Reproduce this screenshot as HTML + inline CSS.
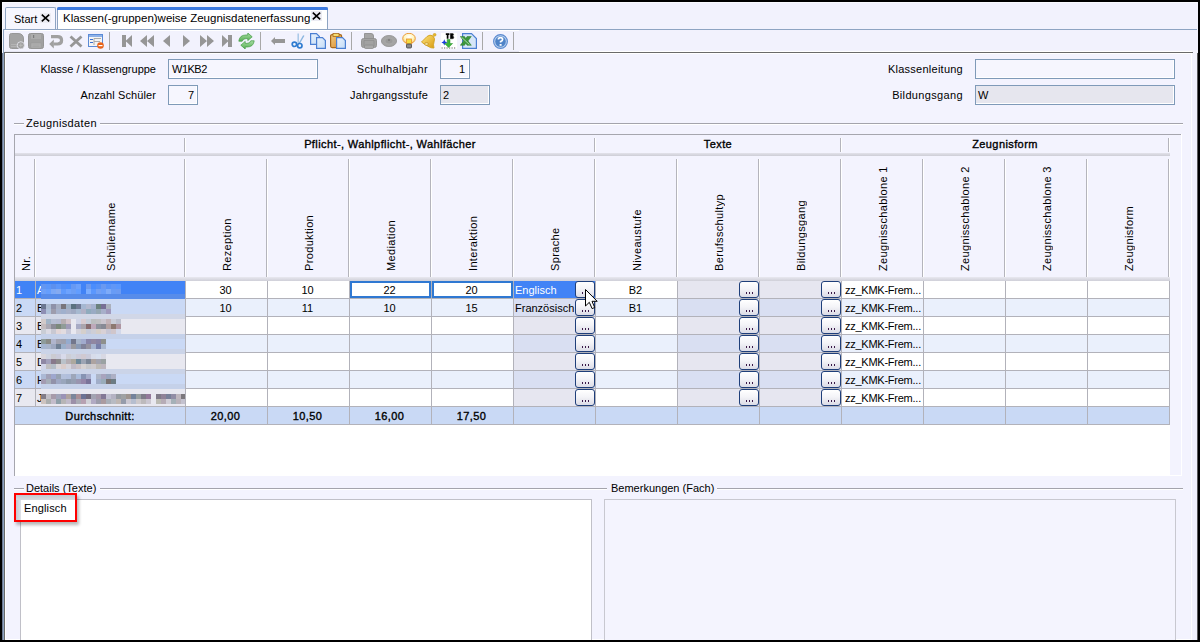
<!DOCTYPE html>
<html><head><meta charset="utf-8"><title>Zeugnisdatenerfassung</title>
<style>
html,body{margin:0;padding:0}
body{width:1200px;height:642px;position:relative;overflow:hidden;background:#000;font-family:"Liberation Sans",sans-serif;font-size:11px;color:#000}
body>div,body>svg{position:absolute}
.t{white-space:nowrap;line-height:13px;height:13px}
.vt{writing-mode:vertical-rl;transform:rotate(180deg);width:13px;text-align:left}
.btn{position:absolute;width:20px;height:17px;box-sizing:border-box;border:1px solid #1f3f7a;border-radius:3px;background:linear-gradient(#ffffff,#f4f4f8 45%,#dcdce6);}
.btn::after{content:"";position:absolute;left:6px;top:10px;width:1px;height:2px;background:#3a1848;box-shadow:3px 0 #3a1848,6px 0 #3a1848}
</style></head><body>
<div style="left:2px;top:2px;width:1196px;height:639px;background:#f2f2fd"></div>
<div style="left:2px;top:2px;width:1195px;height:1px;background:#fafaff"></div>
<div style="left:2px;top:2px;width:1px;height:51px;background:#fafaff"></div>
<div style="left:3px;top:29px;width:1194px;height:1px;background:#8ea4c2"></div>
<div style="left:3px;top:29px;width:1px;height:611px;background:#8ea4c2"></div>
<div style="left:2px;top:53px;width:1px;height:587px;background:#6c7890"></div>
<div style="left:5px;top:7px;width:51px;height:22px;background:#f6f6fe;border:1px solid #8ea4c2;border-bottom:none;border-radius:2px 2px 0 0;box-sizing:border-box"></div>
<div class="t" style="left:14px;top:13px;font-size:11px">Start</div>
<div style="left:40px;top:13px;width:11px;height:10px;background:#ececf3"></div>
<svg style="position:absolute;left:41px;top:14px" width="9" height="8" viewBox="0 0 9 8"><path d="M0.8 0.6 L8.2 7.4 M8.2 0.6 L0.8 7.4" stroke="#000" stroke-width="1.6"/></svg>
<div style="left:57px;top:7px;width:271px;height:22px;background:#fff;border:1px solid #8ea4c2;border-bottom:none;border-radius:2px 2px 0 0;box-sizing:border-box"></div>
<div style="left:57px;top:7px;width:271px;height:3px;background:#3d7ae0;border-radius:2px 2px 0 0"></div>
<div class="t" style="left:63px;top:12px;font-size:11.5px">Klassen(-gruppen)weise Zeugnisdatenerfassung</div>
<div style="left:311px;top:11px;width:11px;height:10px;background:#ececf3"></div>
<svg style="position:absolute;left:312px;top:12px" width="9" height="8" viewBox="0 0 9 8"><path d="M0.8 0.6 L8.2 7.4 M8.2 0.6 L0.8 7.4" stroke="#000" stroke-width="1.6"/></svg>
<div style="left:4px;top:30px;width:1193px;height:22px;background:#f2f2fd"></div>
<div style="left:5px;top:30px;width:514px;height:1px;background:#ffffff"></div>
<div style="left:5px;top:51px;width:514px;height:1px;background:#e6e6f2"></div>
<div style="left:519px;top:51px;width:673px;height:1px;background:#ffffff"></div>
<div style="left:4px;top:52px;width:1189px;height:1px;background:#6a6a6a"></div>
<div style="left:5px;top:53px;width:1187px;height:1px;background:#ffffff"></div>
<div style="left:4px;top:52px;width:1px;height:588px;background:#6a6a6a"></div>
<div style="left:5px;top:53px;width:1px;height:587px;background:#ffffff"></div>
<div style="left:1191px;top:53px;width:1px;height:587px;background:#ffffff"></div>
<div style="left:1197px;top:53px;width:1px;height:587px;background:#5a5a5a"></div>
<svg style="position:absolute;left:9px;top:33px" width="16" height="16" viewBox="0 0 16 16"><path d="M0.5 2.5 Q0.5 0.5 2.5 0.5 H9 Q14.5 0.5 14.5 6 V13.5 Q14.5 15.5 12.5 15.5 H2.5 Q0.5 15.5 0.5 13.5 Z" fill="#a4a4a4" stroke="#989898"/><path d="M2 11.5 H11 M2 13.5 H11" stroke="#b4b4b4"/><circle cx="11.8" cy="12.3" r="3.6" fill="#a0a0a0" stroke="#f0f0fa" stroke-width="0.7"/><path d="M11.8 10.3 V14.3 M9.8 12.3 H13.8" stroke="#bcbcbc" stroke-width="0.9"/></svg>
<svg style="position:absolute;left:28px;top:33px" width="16" height="16" viewBox="0 0 16 16"><rect x="0.5" y="0.5" width="15" height="15" rx="2" fill="#a0a0a0" stroke="#949494"/><rect x="3" y="1" width="10" height="5" fill="#acacac"/><rect x="5" y="2" width="1.2" height="3" fill="#7c7c7c"/><rect x="3" y="10" width="10" height="5" fill="#b0b0b0" stroke="#9a9a9a" stroke-width="0.6"/><path d="M4.5 12 H11.5 M4.5 13.5 H11.5" stroke="#a0a0a0" stroke-width="0.6"/></svg>
<svg style="position:absolute;left:49px;top:34px" width="15" height="15" viewBox="0 0 15 15"><path d="M2 2.6 H8.5 Q12.6 2.6 12.6 6.3 Q12.6 10 8.5 10 H4.5" fill="none" stroke="#a0a0a0" stroke-width="3.2"/><path d="M0.2 10 L4.8 5.6 V14.6 Z" fill="#a0a0a0"/></svg>
<svg style="position:absolute;left:69px;top:35px" width="14" height="13" viewBox="0 0 14 13"><path d="M1.5 1.5 L12.5 11.5 M12.5 1.5 L1.5 11.5" stroke="#969696" stroke-width="2.8"/></svg>
<svg style="position:absolute;left:88px;top:34px" width="17" height="15" viewBox="0 0 17 15"><rect x="0.5" y="0.5" width="14" height="12" fill="#f4f4f4" stroke="#5a8ad6"/><rect x="1" y="1" width="13" height="2" fill="#8fb2e8"/><rect x="2" y="5" width="3" height="1" fill="#3a6fd0"/><rect x="2" y="8" width="3" height="1" fill="#3a6fd0"/><path d="M6 4.5 H13 M6 4.5 V11 M6 7.5 H12" stroke="#aaa" fill="none"/><circle cx="12.5" cy="11.5" r="3.3" fill="#e8641a"/><rect x="10.5" y="11" width="4" height="1.2" fill="#fff"/></svg>
<div style="left:109px;top:32px;width:1px;height:18px;background:#a8a8a8"></div>
<div style="left:260px;top:32px;width:1px;height:18px;background:#a8a8a8"></div>
<div style="left:351px;top:32px;width:1px;height:18px;background:#a8a8a8"></div>
<div style="left:482px;top:32px;width:1px;height:18px;background:#a8a8a8"></div>
<div style="left:513px;top:32px;width:1px;height:18px;background:#a8a8a8"></div>
<svg style="position:absolute;left:122px;top:35px" width="10" height="12" viewBox="0 0 10 12"><rect x="0" y="0" width="4" height="12" fill="#969696"/><path d="M10 0 V12 L3.5 6 Z" fill="#969696"/></svg>
<svg style="position:absolute;left:140px;top:35px" width="14" height="12" viewBox="0 0 14 12"><path d="M7 0 V12 L0 6 Z M14 0 V12 L7 6 Z" fill="#969696"/></svg>
<svg style="position:absolute;left:163px;top:35px" width="7" height="12" viewBox="0 0 7 12"><path d="M7 0 V12 L0 6 Z" fill="#969696"/></svg>
<svg style="position:absolute;left:183px;top:35px" width="7" height="12" viewBox="0 0 7 12"><path d="M0 0 V12 L7 6 Z" fill="#969696"/></svg>
<svg style="position:absolute;left:200px;top:35px" width="14" height="12" viewBox="0 0 14 12"><path d="M0 0 V12 L7 6 Z M7 0 V12 L14 6 Z" fill="#969696"/></svg>
<svg style="position:absolute;left:222px;top:35px" width="10" height="12" viewBox="0 0 10 12"><path d="M0 0 V12 L6.5 6 Z" fill="#969696"/><rect x="6" y="0" width="4" height="12" fill="#969696"/></svg>
<svg style="position:absolute;left:238px;top:33px" width="17" height="16" viewBox="0 0 17 16"><defs><linearGradient id="gr" x1="0" y1="0" x2="0" y2="1"><stop offset="0" stop-color="#a6dca2"/><stop offset="1" stop-color="#58b054"/></linearGradient></defs><path d="M0.8 8.2 Q1.5 2 8 2 H9.8 V0 L14.2 3.8 L9.8 7.6 V5.6 H8 Q5 5.6 4.2 8.2 Z" fill="url(#gr)" stroke="#3f9a3f" stroke-width="0.7"/><path d="M16.2 7.8 Q15.5 14 9 14 H7.2 V16 L2.8 12.2 L7.2 8.4 V10.4 H9 Q12 10.4 12.8 7.8 Z" fill="url(#gr)" stroke="#3f9a3f" stroke-width="0.7"/></svg>
<svg style="position:absolute;left:271px;top:37px" width="14" height="8" viewBox="0 0 14 8"><path d="M0 4 L4 0 V2 H14 V6 H4 V8 Z" fill="#969696"/></svg>
<svg style="position:absolute;left:291px;top:33px" width="14" height="16" viewBox="0 0 14 16"><path d="M7.2 0.5 L7.2 10.5" stroke="#a8c8e8" stroke-width="1.5"/><path d="M12.8 2.5 L8.2 10.5" stroke="#8ab6e0" stroke-width="1.5"/><circle cx="3.4" cy="11.3" r="2.2" fill="#f0f4fc" stroke="#2f7bd0" stroke-width="1.7"/><circle cx="8.8" cy="12.7" r="2.2" fill="#f0f4fc" stroke="#2f7bd0" stroke-width="1.7"/></svg>
<svg style="position:absolute;left:310px;top:33px" width="16" height="16" viewBox="0 0 16 16"><defs><linearGradient id="dg" x1="0" y1="0" x2="1" y2="1"><stop offset="0" stop-color="#eaf2fc"/><stop offset="1" stop-color="#c4dcf6"/></linearGradient></defs><path d="M0.6 0.6 H6.5 L9.4 3.5 V11.4 H0.6 Z" fill="url(#dg)" stroke="#4b7fd2" stroke-width="1.2"/><path d="M6.6 4.6 H12.5 L15.4 7.5 V15.4 H6.6 Z" fill="url(#dg)" stroke="#4b7fd2" stroke-width="1.2"/></svg>
<svg style="position:absolute;left:330px;top:33px" width="16" height="16" viewBox="0 0 16 16"><defs><linearGradient id="cb" x1="0" y1="0" x2="1" y2="1"><stop offset="0" stop-color="#f2cc80"/><stop offset="1" stop-color="#d88a30"/></linearGradient></defs><rect x="0.6" y="1.6" width="11" height="13" rx="1.5" fill="url(#cb)" stroke="#a8681c" stroke-width="1.2"/><rect x="3" y="0.5" width="6" height="3" fill="#f4dc70" stroke="#a8681c" stroke-width="0.8"/><path d="M6.6 4.6 H12.5 L15.4 7.5 V15.4 H6.6 Z" fill="url(#dg)" stroke="#4b7fd2" stroke-width="1.2"/></svg>
<svg style="position:absolute;left:361px;top:33px" width="16" height="16" viewBox="0 0 16 16"><path d="M3.5 0.5 H10 Q12.5 0.5 12.5 3 V7.5 H3.5 Z" fill="#a6a6a6" stroke="#8e8e8e" stroke-width="0.9"/><rect x="0.5" y="5.5" width="15" height="9" rx="2" fill="#a2a2a2" stroke="#8e8e8e" stroke-width="0.9"/><path d="M3 7.5 H13 M3 7.5 V13 M13 7.5 V13" stroke="#8e8e8e" stroke-width="0.7"/><rect x="3.5" y="12" width="9" height="3.5" rx="1" fill="#a8a8a8" stroke="#8e8e8e" stroke-width="0.8"/></svg>
<svg style="position:absolute;left:381px;top:35px" width="16" height="12" viewBox="0 0 16 12"><ellipse cx="8" cy="6" rx="7.6" ry="5.6" fill="#a4a4a4" stroke="#909090" stroke-width="0.8"/><ellipse cx="8" cy="6" rx="4" ry="3" fill="#9a9a9a" stroke="#acacac" stroke-width="0.6"/><circle cx="8" cy="5" r="1" fill="#7a7a7a"/></svg>
<svg style="position:absolute;left:402px;top:33px" width="15" height="16" viewBox="0 0 15 16"><defs><radialGradient id="bl" cx="0.5" cy="0.35" r="0.6"><stop offset="0" stop-color="#ffffff"/><stop offset="0.6" stop-color="#fff6c0"/><stop offset="1" stop-color="#f8d070"/></radialGradient></defs><ellipse cx="7" cy="5.5" rx="6.3" ry="5.2" fill="url(#bl)" stroke="#eb9c3c" stroke-width="1"/><rect x="4.5" y="6" width="5" height="5" fill="#f6dc40" stroke="#e89030" stroke-width="0.8"/><rect x="4.5" y="11" width="5" height="4" rx="1" fill="#8a8a8a" stroke="#444" stroke-width="0.8"/></svg>
<svg style="position:absolute;left:421px;top:33px" width="16" height="16" viewBox="0 0 16 16"><defs><linearGradient id="bg1" x1="0" y1="0" x2="1" y2="1"><stop offset="0" stop-color="#ffe680"/><stop offset="1" stop-color="#d89a10"/></linearGradient></defs><path d="M0.5 9 Q4 5.5 6 3.5 Q9 1 12 3 Q14.5 5.5 13 9 Q12 11.5 13 15 Q10 15.5 6.5 13 Q3 11 0.5 9 Z" fill="url(#bg1)" stroke="#d0a020" stroke-width="0.9"/><circle cx="13.6" cy="1.8" r="1.4" fill="#e8b828" stroke="#c89818" stroke-width="0.6"/><ellipse cx="5.5" cy="11" rx="2" ry="1.3" fill="#f8e8a0" stroke="#b88010" stroke-width="0.6"/></svg>
<svg style="position:absolute;left:441px;top:33px" width="16" height="16" viewBox="0 0 16 16"><rect x="0" y="0" width="16" height="16" fill="#fff"/><path d="M4.8 1.2 H8.4 M6.6 1.2 V5.8" stroke="#000" stroke-width="1.7"/><path d="M9.3 0.4 H11.2 Q12.6 0.4 12.6 1.6 Q12.6 2.6 11.4 2.9 Q12.8 3.2 12.8 4.4 Q12.8 5.8 11.2 5.8 H9.3 Z" fill="#000" stroke="#000" stroke-width="0.4"/><path d="M3.3 6.3 L4.2 8.5 L6.3 9.5 L4.2 10.4 L3.3 12.6 L2.4 10.4 L0.4 9.5 L2.4 8.5 Z" fill="#1a3ce0"/><path d="M6.2 6.5 H9 V10.5 H11.6 L7.6 14.5 L3.6 10.5 H6.2 Z" fill="#3cb43c" stroke="#208c20" stroke-width="0.5"/><path d="M0.5 15 H15.5" stroke="#606060" stroke-width="1.2" stroke-dasharray="1.2 1.3"/></svg>
<svg style="position:absolute;left:460px;top:33px" width="17" height="16" viewBox="0 0 17 16"><path d="M2.6 0.6 H11.5 L16.4 5.5 V15.4 H2.6 Z" fill="#d6e6f8" stroke="#4b7fd2" stroke-width="1.2"/><path d="M0.3 3.5 H4.5 L5.8 5.6 L7.1 3.5 H11.3 L8 7.9 L11.3 12.3 H7.1 L5.8 10.2 L4.5 12.3 H0.3 L3.6 7.9 Z" fill="#3c963c" stroke="#2a7a2a" stroke-width="0.5"/><path d="M1.6 4.3 L9.4 11.5" stroke="#b8e4b8" stroke-width="0.9"/></svg>
<svg style="position:absolute;left:493px;top:34px" width="15" height="15" viewBox="0 0 15 15"><circle cx="7.5" cy="7.5" r="6.9" fill="#b8d0ee" stroke="#5a8ad0" stroke-width="1.1"/><circle cx="7.5" cy="7.5" r="5.3" fill="#4f84c8"/><path d="M5.4 5.6 Q5.4 3.6 7.5 3.6 Q9.6 3.6 9.6 5.4 Q9.6 6.7 7.6 7.5 V8.6" fill="none" stroke="#fff" stroke-width="1.7"/><rect x="6.6" y="10" width="2" height="1.8" fill="#fff"/></svg>
<div style="left:6px;top:54px;width:1185px;height:585px;background:#f3f3fe"></div>
<div style="left:5px;top:639px;width:1187px;height:1px;background:#fff"></div>
<div class="t" style="left:-244px;width:400px;text-align:right;top:63px;">Klasse / Klassengruppe</div>
<div class="t" style="left:-244px;width:400px;text-align:right;top:89px;letter-spacing:0.1px">Anzahl Schüler</div>
<div style="left:168px;top:59px;width:150px;height:20px;background:#f6f6fe;border:1px solid #7f9ab8;box-sizing:border-box;box-shadow:inset -1px -1px #fff"></div>
<div class="t" style="left:172px;top:63px;letter-spacing:-0.5px">W1KB2</div>
<div style="left:168px;top:85px;width:30px;height:20px;background:#f6f6fe;border:1px solid #7f9ab8;box-sizing:border-box;box-shadow:inset -1px -1px #fff"></div>
<div class="t" style="left:-206px;width:400px;text-align:right;top:89px;">7</div>
<div class="t" style="left:28px;width:400px;text-align:right;top:63px;letter-spacing:0.35px">Schulhalbjahr</div>
<div class="t" style="left:28px;width:400px;text-align:right;top:89px;letter-spacing:0.2px">Jahrgangsstufe</div>
<div style="left:440px;top:59px;width:30px;height:20px;background:#f6f6fe;border:1px solid #7f9ab8;box-sizing:border-box;box-shadow:inset -1px -1px #fff"></div>
<div class="t" style="left:65px;width:400px;text-align:right;top:63px;">1</div>
<div style="left:440px;top:85px;width:50px;height:20px;background:#e6e6ee;border:1px solid #7f9ab8;box-sizing:border-box;box-shadow:inset -1px -1px #fff"></div>
<div class="t" style="left:443px;top:89px;">2</div>
<div class="t" style="left:563px;width:400px;text-align:right;top:63px;letter-spacing:0.25px">Klassenleitung</div>
<div class="t" style="left:563px;width:400px;text-align:right;top:89px;letter-spacing:0.35px">Bildungsgang</div>
<div style="left:975px;top:59px;width:200px;height:20px;background:#f6f6fe;border:1px solid #7f9ab8;box-sizing:border-box;box-shadow:inset -1px -1px #fff"></div>
<div style="left:975px;top:85px;width:200px;height:20px;background:#e6e6ee;border:1px solid #7f9ab8;box-sizing:border-box;box-shadow:inset -1px -1px #fff"></div>
<div class="t" style="left:978px;top:89px;">W</div>
<div style="left:14px;top:123px;width:10px;height:1px;background:#a4a4ac"></div>
<div style="left:14px;top:124px;width:10px;height:1px;background:#fff"></div>
<div class="t" style="left:26px;top:117px;letter-spacing:0.35px">Zeugnisdaten</div>
<div style="left:100px;top:123px;width:1083px;height:1px;background:#a4a4ac"></div>
<div style="left:100px;top:124px;width:1083px;height:1px;background:#fff"></div>
<div style="left:14px;top:134px;width:1168px;height:342px;background:#fff"></div>
<div style="left:15px;top:135px;width:1166px;height:146px;background:#f3f3fe"></div>
<div style="left:1170px;top:135px;width:11px;height:340px;background:#f3f3fe"></div>
<div style="left:14px;top:134px;width:1168px;height:1px;background:#a6a6ae"></div>
<div style="left:14px;top:134px;width:1px;height:342px;background:#a6a6ae"></div>
<div style="left:1181px;top:134px;width:1px;height:342px;background:#fff"></div>
<div style="left:15px;top:153px;width:1155px;height:3px;background:linear-gradient(#e2e2ea,#cdcdd6)"></div>
<div style="left:184px;top:138px;width:1px;height:14px;background:#b4b4bc"></div>
<div style="left:185px;top:138px;width:1px;height:14px;background:#fff"></div>
<div style="left:594px;top:138px;width:1px;height:14px;background:#b4b4bc"></div>
<div style="left:595px;top:138px;width:1px;height:14px;background:#fff"></div>
<div style="left:840px;top:138px;width:1px;height:14px;background:#b4b4bc"></div>
<div style="left:841px;top:138px;width:1px;height:14px;background:#fff"></div>
<div style="left:1168px;top:138px;width:1px;height:14px;background:#b4b4bc"></div>
<div style="left:1169px;top:138px;width:1px;height:14px;background:#fff"></div>
<div class="t" style="left:185px;width:410px;text-align:center;top:138px;-webkit-text-stroke:0.35px #000;letter-spacing:0.4px">Pflicht-, Wahlpflicht-, Wahlfächer</div>
<div class="t" style="left:595px;width:246px;text-align:center;top:138px;-webkit-text-stroke:0.35px #000;letter-spacing:0.4px">Texte</div>
<div class="t" style="left:841px;width:328px;text-align:center;top:138px;-webkit-text-stroke:0.35px #000;letter-spacing:0.4px">Zeugnisform</div>
<div style="left:15px;top:277px;width:1155px;height:4px;background:linear-gradient(#e8e8f0,#cfcfd8)"></div>
<div style="left:34px;top:159px;width:1px;height:118px;background:#b4b4bc"></div>
<div style="left:35px;top:159px;width:1px;height:118px;background:#fff"></div>
<div style="left:184px;top:159px;width:1px;height:118px;background:#b4b4bc"></div>
<div style="left:185px;top:159px;width:1px;height:118px;background:#fff"></div>
<div style="left:266px;top:159px;width:1px;height:118px;background:#b4b4bc"></div>
<div style="left:267px;top:159px;width:1px;height:118px;background:#fff"></div>
<div style="left:348px;top:159px;width:1px;height:118px;background:#b4b4bc"></div>
<div style="left:349px;top:159px;width:1px;height:118px;background:#fff"></div>
<div style="left:430px;top:159px;width:1px;height:118px;background:#b4b4bc"></div>
<div style="left:431px;top:159px;width:1px;height:118px;background:#fff"></div>
<div style="left:512px;top:159px;width:1px;height:118px;background:#b4b4bc"></div>
<div style="left:513px;top:159px;width:1px;height:118px;background:#fff"></div>
<div style="left:594px;top:159px;width:1px;height:118px;background:#b4b4bc"></div>
<div style="left:595px;top:159px;width:1px;height:118px;background:#fff"></div>
<div style="left:676px;top:159px;width:1px;height:118px;background:#b4b4bc"></div>
<div style="left:677px;top:159px;width:1px;height:118px;background:#fff"></div>
<div style="left:758px;top:159px;width:1px;height:118px;background:#b4b4bc"></div>
<div style="left:759px;top:159px;width:1px;height:118px;background:#fff"></div>
<div style="left:840px;top:159px;width:1px;height:118px;background:#b4b4bc"></div>
<div style="left:841px;top:159px;width:1px;height:118px;background:#fff"></div>
<div style="left:922px;top:159px;width:1px;height:118px;background:#b4b4bc"></div>
<div style="left:923px;top:159px;width:1px;height:118px;background:#fff"></div>
<div style="left:1004px;top:159px;width:1px;height:118px;background:#b4b4bc"></div>
<div style="left:1005px;top:159px;width:1px;height:118px;background:#fff"></div>
<div style="left:1086px;top:159px;width:1px;height:118px;background:#b4b4bc"></div>
<div style="left:1087px;top:159px;width:1px;height:118px;background:#fff"></div>
<div style="left:1168px;top:159px;width:1px;height:118px;background:#b4b4bc"></div>
<div style="left:1169px;top:159px;width:1px;height:118px;background:#fff"></div>
<div class="t vt" style="left:19.5px;top:171px;height:100px;letter-spacing:0.35px">Nr.</div>
<div class="t vt" style="left:104.5px;top:171px;height:100px;letter-spacing:0.35px">Schülername</div>
<div class="t vt" style="left:220.5px;top:171px;height:100px;letter-spacing:0.35px">Rezeption</div>
<div class="t vt" style="left:302.5px;top:171px;height:100px;letter-spacing:0.35px">Produktion</div>
<div class="t vt" style="left:384.5px;top:171px;height:100px;letter-spacing:0.35px">Mediation</div>
<div class="t vt" style="left:466.5px;top:171px;height:100px;letter-spacing:0.35px">Interaktion</div>
<div class="t vt" style="left:548.5px;top:171px;height:100px;letter-spacing:0.35px">Sprache</div>
<div class="t vt" style="left:630.5px;top:171px;height:100px;letter-spacing:0.35px">Niveaustufe</div>
<div class="t vt" style="left:712.5px;top:171px;height:100px;letter-spacing:0.35px">Berufsschultyp</div>
<div class="t vt" style="left:794.5px;top:171px;height:100px;letter-spacing:0.35px">Bildungsgang</div>
<div class="t vt" style="left:876.5px;top:171px;height:100px;letter-spacing:0.35px">Zeugnisschablone 1</div>
<div class="t vt" style="left:958.5px;top:171px;height:100px;letter-spacing:0.35px">Zeugnisschablone 2</div>
<div class="t vt" style="left:1040.5px;top:171px;height:100px;letter-spacing:0.35px">Zeugnisschablone 3</div>
<div class="t vt" style="left:1122.5px;top:171px;height:100px;letter-spacing:0.35px">Zeugnisform</div>
<div style="left:15px;top:281px;width:20px;height:17px;background:#4183f6"></div>
<div style="left:35px;top:281px;width:150px;height:17px;background:#4183f6"></div>
<div style="left:185px;top:281px;width:82px;height:17px;background:#fff"></div>
<div style="left:267px;top:281px;width:82px;height:17px;background:#fff"></div>
<div style="left:349px;top:281px;width:82px;height:17px;background:#fff"></div>
<div style="left:431px;top:281px;width:82px;height:17px;background:#fff"></div>
<div style="left:513px;top:281px;width:82px;height:17px;background:#4183f6"></div>
<div style="left:595px;top:281px;width:82px;height:17px;background:#fff"></div>
<div style="left:677px;top:281px;width:82px;height:17px;background:#e6e6f0"></div>
<div style="left:759px;top:281px;width:82px;height:17px;background:#e6e6f0"></div>
<div style="left:841px;top:281px;width:82px;height:17px;background:#fff"></div>
<div style="left:923px;top:281px;width:82px;height:17px;background:#fff"></div>
<div style="left:1005px;top:281px;width:82px;height:17px;background:#fff"></div>
<div style="left:1087px;top:281px;width:82px;height:17px;background:#fff"></div>
<div style="left:15px;top:298px;width:1155px;height:1px;background:#b2b2ba"></div>
<div class="t" style="left:16px;top:284px;color:#fff">1</div>
<div class="t" style="left:37px;top:284px;color:#fff">A</div>
<div class="t" style="left:185px;width:81px;text-align:center;top:284px;">30</div>
<div class="t" style="left:267px;width:81px;text-align:center;top:284px;">10</div>
<div class="t" style="left:349px;width:81px;text-align:center;top:284px;">22</div>
<div class="t" style="left:431px;width:81px;text-align:center;top:284px;">20</div>
<div class="t" style="left:515px;top:284px;color:#fff">Englisch</div>
<div class="t" style="left:595px;width:81px;text-align:center;top:284px;">B2</div>
<div class="t" style="left:845px;top:284px;letter-spacing:-0.25px">zz_KMK-Frem...</div>
<div style="left:15px;top:299px;width:20px;height:17px;background:#cad9f5"></div>
<div style="left:35px;top:299px;width:150px;height:17px;background:#cad9f5"></div>
<div style="left:185px;top:299px;width:82px;height:17px;background:#eaf0fc"></div>
<div style="left:267px;top:299px;width:82px;height:17px;background:#eaf0fc"></div>
<div style="left:349px;top:299px;width:82px;height:17px;background:#eaf0fc"></div>
<div style="left:431px;top:299px;width:82px;height:17px;background:#eaf0fc"></div>
<div style="left:513px;top:299px;width:82px;height:17px;background:#d9dff2"></div>
<div style="left:595px;top:299px;width:82px;height:17px;background:#eaf0fc"></div>
<div style="left:677px;top:299px;width:82px;height:17px;background:#d9dff2"></div>
<div style="left:759px;top:299px;width:82px;height:17px;background:#d9dff2"></div>
<div style="left:841px;top:299px;width:82px;height:17px;background:#eaf0fc"></div>
<div style="left:923px;top:299px;width:82px;height:17px;background:#eaf0fc"></div>
<div style="left:1005px;top:299px;width:82px;height:17px;background:#eaf0fc"></div>
<div style="left:1087px;top:299px;width:82px;height:17px;background:#eaf0fc"></div>
<div style="left:15px;top:316px;width:1155px;height:1px;background:#b2b2ba"></div>
<div class="t" style="left:16px;top:302px;">2</div>
<div class="t" style="left:37px;top:302px;">B</div>
<div class="t" style="left:185px;width:81px;text-align:center;top:302px;">10</div>
<div class="t" style="left:267px;width:81px;text-align:center;top:302px;">11</div>
<div class="t" style="left:349px;width:81px;text-align:center;top:302px;">10</div>
<div class="t" style="left:431px;width:81px;text-align:center;top:302px;">15</div>
<div class="t" style="left:515px;top:302px;">Französisch</div>
<div class="t" style="left:595px;width:81px;text-align:center;top:302px;">B1</div>
<div class="t" style="left:845px;top:302px;letter-spacing:-0.25px">zz_KMK-Frem...</div>
<div style="left:15px;top:317px;width:20px;height:17px;background:#e8e8f0"></div>
<div style="left:35px;top:317px;width:150px;height:17px;background:#e8e8f0"></div>
<div style="left:185px;top:317px;width:82px;height:17px;background:#fff"></div>
<div style="left:267px;top:317px;width:82px;height:17px;background:#fff"></div>
<div style="left:349px;top:317px;width:82px;height:17px;background:#fff"></div>
<div style="left:431px;top:317px;width:82px;height:17px;background:#fff"></div>
<div style="left:513px;top:317px;width:82px;height:17px;background:#e6e6f0"></div>
<div style="left:595px;top:317px;width:82px;height:17px;background:#fff"></div>
<div style="left:677px;top:317px;width:82px;height:17px;background:#e6e6f0"></div>
<div style="left:759px;top:317px;width:82px;height:17px;background:#e6e6f0"></div>
<div style="left:841px;top:317px;width:82px;height:17px;background:#fff"></div>
<div style="left:923px;top:317px;width:82px;height:17px;background:#fff"></div>
<div style="left:1005px;top:317px;width:82px;height:17px;background:#fff"></div>
<div style="left:1087px;top:317px;width:82px;height:17px;background:#fff"></div>
<div style="left:15px;top:334px;width:1155px;height:1px;background:#b2b2ba"></div>
<div class="t" style="left:16px;top:320px;">3</div>
<div class="t" style="left:37px;top:320px;">B</div>
<div class="t" style="left:845px;top:320px;letter-spacing:-0.25px">zz_KMK-Frem...</div>
<div style="left:15px;top:335px;width:20px;height:17px;background:#cad9f5"></div>
<div style="left:35px;top:335px;width:150px;height:17px;background:#cad9f5"></div>
<div style="left:185px;top:335px;width:82px;height:17px;background:#eaf0fc"></div>
<div style="left:267px;top:335px;width:82px;height:17px;background:#eaf0fc"></div>
<div style="left:349px;top:335px;width:82px;height:17px;background:#eaf0fc"></div>
<div style="left:431px;top:335px;width:82px;height:17px;background:#eaf0fc"></div>
<div style="left:513px;top:335px;width:82px;height:17px;background:#d9dff2"></div>
<div style="left:595px;top:335px;width:82px;height:17px;background:#eaf0fc"></div>
<div style="left:677px;top:335px;width:82px;height:17px;background:#d9dff2"></div>
<div style="left:759px;top:335px;width:82px;height:17px;background:#d9dff2"></div>
<div style="left:841px;top:335px;width:82px;height:17px;background:#eaf0fc"></div>
<div style="left:923px;top:335px;width:82px;height:17px;background:#eaf0fc"></div>
<div style="left:1005px;top:335px;width:82px;height:17px;background:#eaf0fc"></div>
<div style="left:1087px;top:335px;width:82px;height:17px;background:#eaf0fc"></div>
<div style="left:15px;top:352px;width:1155px;height:1px;background:#b2b2ba"></div>
<div class="t" style="left:16px;top:338px;">4</div>
<div class="t" style="left:37px;top:338px;">B</div>
<div class="t" style="left:845px;top:338px;letter-spacing:-0.25px">zz_KMK-Frem...</div>
<div style="left:15px;top:353px;width:20px;height:17px;background:#e8e8f0"></div>
<div style="left:35px;top:353px;width:150px;height:17px;background:#e8e8f0"></div>
<div style="left:185px;top:353px;width:82px;height:17px;background:#fff"></div>
<div style="left:267px;top:353px;width:82px;height:17px;background:#fff"></div>
<div style="left:349px;top:353px;width:82px;height:17px;background:#fff"></div>
<div style="left:431px;top:353px;width:82px;height:17px;background:#fff"></div>
<div style="left:513px;top:353px;width:82px;height:17px;background:#e6e6f0"></div>
<div style="left:595px;top:353px;width:82px;height:17px;background:#fff"></div>
<div style="left:677px;top:353px;width:82px;height:17px;background:#e6e6f0"></div>
<div style="left:759px;top:353px;width:82px;height:17px;background:#e6e6f0"></div>
<div style="left:841px;top:353px;width:82px;height:17px;background:#fff"></div>
<div style="left:923px;top:353px;width:82px;height:17px;background:#fff"></div>
<div style="left:1005px;top:353px;width:82px;height:17px;background:#fff"></div>
<div style="left:1087px;top:353px;width:82px;height:17px;background:#fff"></div>
<div style="left:15px;top:370px;width:1155px;height:1px;background:#b2b2ba"></div>
<div class="t" style="left:16px;top:356px;">5</div>
<div class="t" style="left:37px;top:356px;">D</div>
<div class="t" style="left:845px;top:356px;letter-spacing:-0.25px">zz_KMK-Frem...</div>
<div style="left:15px;top:371px;width:20px;height:17px;background:#cad9f5"></div>
<div style="left:35px;top:371px;width:150px;height:17px;background:#cad9f5"></div>
<div style="left:185px;top:371px;width:82px;height:17px;background:#eaf0fc"></div>
<div style="left:267px;top:371px;width:82px;height:17px;background:#eaf0fc"></div>
<div style="left:349px;top:371px;width:82px;height:17px;background:#eaf0fc"></div>
<div style="left:431px;top:371px;width:82px;height:17px;background:#eaf0fc"></div>
<div style="left:513px;top:371px;width:82px;height:17px;background:#d9dff2"></div>
<div style="left:595px;top:371px;width:82px;height:17px;background:#eaf0fc"></div>
<div style="left:677px;top:371px;width:82px;height:17px;background:#d9dff2"></div>
<div style="left:759px;top:371px;width:82px;height:17px;background:#d9dff2"></div>
<div style="left:841px;top:371px;width:82px;height:17px;background:#eaf0fc"></div>
<div style="left:923px;top:371px;width:82px;height:17px;background:#eaf0fc"></div>
<div style="left:1005px;top:371px;width:82px;height:17px;background:#eaf0fc"></div>
<div style="left:1087px;top:371px;width:82px;height:17px;background:#eaf0fc"></div>
<div style="left:15px;top:388px;width:1155px;height:1px;background:#b2b2ba"></div>
<div class="t" style="left:16px;top:374px;">6</div>
<div class="t" style="left:37px;top:374px;">H</div>
<div class="t" style="left:845px;top:374px;letter-spacing:-0.25px">zz_KMK-Frem...</div>
<div style="left:15px;top:389px;width:20px;height:17px;background:#e8e8f0"></div>
<div style="left:35px;top:389px;width:150px;height:17px;background:#e8e8f0"></div>
<div style="left:185px;top:389px;width:82px;height:17px;background:#fff"></div>
<div style="left:267px;top:389px;width:82px;height:17px;background:#fff"></div>
<div style="left:349px;top:389px;width:82px;height:17px;background:#fff"></div>
<div style="left:431px;top:389px;width:82px;height:17px;background:#fff"></div>
<div style="left:513px;top:389px;width:82px;height:17px;background:#e6e6f0"></div>
<div style="left:595px;top:389px;width:82px;height:17px;background:#fff"></div>
<div style="left:677px;top:389px;width:82px;height:17px;background:#e6e6f0"></div>
<div style="left:759px;top:389px;width:82px;height:17px;background:#e6e6f0"></div>
<div style="left:841px;top:389px;width:82px;height:17px;background:#fff"></div>
<div style="left:923px;top:389px;width:82px;height:17px;background:#fff"></div>
<div style="left:1005px;top:389px;width:82px;height:17px;background:#fff"></div>
<div style="left:1087px;top:389px;width:82px;height:17px;background:#fff"></div>
<div style="left:15px;top:406px;width:1155px;height:1px;background:#b2b2ba"></div>
<div class="t" style="left:16px;top:392px;">7</div>
<div class="t" style="left:37px;top:392px;">J</div>
<div class="t" style="left:845px;top:392px;letter-spacing:-0.25px">zz_KMK-Frem...</div>
<div style="left:15px;top:407px;width:1154px;height:17px;background:#c9d9f5"></div>
<div style="left:15px;top:424px;width:1155px;height:1px;background:#b2b2ba"></div>
<div class="t" style="left:15px;width:170px;text-align:center;top:410px;-webkit-text-stroke:0.35px #000;letter-spacing:0.4px">Durchschnitt:</div>
<div class="t" style="left:185px;width:81px;text-align:center;top:410px;-webkit-text-stroke:0.35px #000;letter-spacing:0.4px">20,00</div>
<div class="t" style="left:267px;width:81px;text-align:center;top:410px;-webkit-text-stroke:0.35px #000;letter-spacing:0.4px">10,50</div>
<div class="t" style="left:349px;width:81px;text-align:center;top:410px;-webkit-text-stroke:0.35px #000;letter-spacing:0.4px">16,00</div>
<div class="t" style="left:431px;width:81px;text-align:center;top:410px;-webkit-text-stroke:0.35px #000;letter-spacing:0.4px">17,50</div>
<div style="left:35px;top:281px;width:1px;height:126px;background:#b2b2ba"></div>
<div style="left:185px;top:281px;width:1px;height:144px;background:#b2b2ba"></div>
<div style="left:267px;top:281px;width:1px;height:144px;background:#b2b2ba"></div>
<div style="left:349px;top:281px;width:1px;height:144px;background:#b2b2ba"></div>
<div style="left:431px;top:281px;width:1px;height:144px;background:#b2b2ba"></div>
<div style="left:513px;top:281px;width:1px;height:144px;background:#b2b2ba"></div>
<div style="left:595px;top:281px;width:1px;height:144px;background:#b2b2ba"></div>
<div style="left:677px;top:281px;width:1px;height:144px;background:#b2b2ba"></div>
<div style="left:759px;top:281px;width:1px;height:144px;background:#b2b2ba"></div>
<div style="left:841px;top:281px;width:1px;height:144px;background:#b2b2ba"></div>
<div style="left:923px;top:281px;width:1px;height:144px;background:#b2b2ba"></div>
<div style="left:1005px;top:281px;width:1px;height:144px;background:#b2b2ba"></div>
<div style="left:1087px;top:281px;width:1px;height:144px;background:#b2b2ba"></div>
<div style="left:1169px;top:281px;width:1px;height:144px;background:#b2b2ba"></div>
<div style="left:350px;top:281px;width:81px;height:17px;border:2px solid #2f78d2;box-sizing:border-box"></div>
<div style="left:432px;top:281px;width:81px;height:17px;border:2px solid #2f78d2;box-sizing:border-box"></div>
<div class="btn" style="left:575px;top:281px"></div>
<div class="btn" style="left:739px;top:281px"></div>
<div class="btn" style="left:821px;top:281px"></div>
<div class="btn" style="left:575px;top:299px"></div>
<div class="btn" style="left:739px;top:299px"></div>
<div class="btn" style="left:821px;top:299px"></div>
<div class="btn" style="left:575px;top:317px"></div>
<div class="btn" style="left:739px;top:317px"></div>
<div class="btn" style="left:821px;top:317px"></div>
<div class="btn" style="left:575px;top:335px"></div>
<div class="btn" style="left:739px;top:335px"></div>
<div class="btn" style="left:821px;top:335px"></div>
<div class="btn" style="left:575px;top:353px"></div>
<div class="btn" style="left:739px;top:353px"></div>
<div class="btn" style="left:821px;top:353px"></div>
<div class="btn" style="left:575px;top:371px"></div>
<div class="btn" style="left:739px;top:371px"></div>
<div class="btn" style="left:821px;top:371px"></div>
<div class="btn" style="left:575px;top:389px"></div>
<div class="btn" style="left:739px;top:389px"></div>
<div class="btn" style="left:821px;top:389px"></div>
<div style="left:41px;top:284px;width:5px;height:5px;background:#6496f1"></div>
<div style="left:46px;top:284px;width:5px;height:5px;background:#5c96f9"></div>
<div style="left:51px;top:284px;width:5px;height:5px;background:#5d90ee"></div>
<div style="left:56px;top:284px;width:5px;height:5px;background:#5c96fa"></div>
<div style="left:61px;top:284px;width:5px;height:5px;background:#538ef5"></div>
<div style="left:66px;top:284px;width:5px;height:5px;background:#4c8ffd"></div>
<div style="left:71px;top:284px;width:5px;height:5px;background:#6799f3"></div>
<div style="left:76px;top:284px;width:5px;height:5px;background:#6da1fb"></div>
<div style="left:81px;top:284px;width:5px;height:5px;background:#4183f6"></div>
<div style="left:86px;top:284px;width:5px;height:5px;background:#6c9aef"></div>
<div style="left:91px;top:284px;width:5px;height:5px;background:#4a8dfd"></div>
<div style="left:96px;top:284px;width:5px;height:5px;background:#5490f7"></div>
<div style="left:101px;top:284px;width:5px;height:5px;background:#6999f1"></div>
<div style="left:106px;top:284px;width:5px;height:5px;background:#5893f9"></div>
<div style="left:111px;top:284px;width:5px;height:5px;background:#6197f6"></div>
<div style="left:116px;top:284px;width:5px;height:5px;background:#5a97fd"></div>
<div style="left:121px;top:284px;width:5px;height:5px;background:#4183f6"></div>
<div style="left:126px;top:284px;width:5px;height:5px;background:#4183f6"></div>
<div style="left:131px;top:284px;width:5px;height:5px;background:#4183f6"></div>
<div style="left:136px;top:284px;width:5px;height:5px;background:#4183f6"></div>
<div style="left:141px;top:284px;width:5px;height:5px;background:#4183f6"></div>
<div style="left:146px;top:284px;width:5px;height:5px;background:#4183f6"></div>
<div style="left:151px;top:284px;width:5px;height:5px;background:#4183f6"></div>
<div style="left:156px;top:284px;width:5px;height:5px;background:#4183f6"></div>
<div style="left:161px;top:284px;width:5px;height:5px;background:#4183f6"></div>
<div style="left:166px;top:284px;width:5px;height:5px;background:#4183f6"></div>
<div style="left:171px;top:284px;width:5px;height:5px;background:#4183f6"></div>
<div style="left:176px;top:284px;width:5px;height:5px;background:#4183f6"></div>
<div style="left:181px;top:284px;width:4px;height:5px;background:#4183f6"></div>
<div style="left:41px;top:289px;width:5px;height:5px;background:#6da0f8"></div>
<div style="left:46px;top:289px;width:5px;height:5px;background:#659efd"></div>
<div style="left:51px;top:289px;width:5px;height:5px;background:#7ca8f6"></div>
<div style="left:56px;top:289px;width:5px;height:5px;background:#85aaf0"></div>
<div style="left:61px;top:289px;width:5px;height:5px;background:#5f9afd"></div>
<div style="left:66px;top:289px;width:5px;height:5px;background:#6ea3fd"></div>
<div style="left:71px;top:289px;width:5px;height:5px;background:#6b9ef6"></div>
<div style="left:76px;top:289px;width:5px;height:5px;background:#629dff"></div>
<div style="left:81px;top:289px;width:5px;height:5px;background:#4183f6"></div>
<div style="left:86px;top:289px;width:5px;height:5px;background:#7aadff"></div>
<div style="left:91px;top:289px;width:5px;height:5px;background:#5a97fe"></div>
<div style="left:96px;top:289px;width:5px;height:5px;background:#72a0f4"></div>
<div style="left:101px;top:289px;width:5px;height:5px;background:#699efa"></div>
<div style="left:106px;top:289px;width:5px;height:5px;background:#7eabf8"></div>
<div style="left:111px;top:289px;width:5px;height:5px;background:#689cf6"></div>
<div style="left:116px;top:289px;width:5px;height:5px;background:#6c9bf2"></div>
<div style="left:121px;top:289px;width:5px;height:5px;background:#4183f6"></div>
<div style="left:126px;top:289px;width:5px;height:5px;background:#4183f6"></div>
<div style="left:131px;top:289px;width:5px;height:5px;background:#4183f6"></div>
<div style="left:136px;top:289px;width:5px;height:5px;background:#4183f6"></div>
<div style="left:141px;top:289px;width:5px;height:5px;background:#4183f6"></div>
<div style="left:146px;top:289px;width:5px;height:5px;background:#4183f6"></div>
<div style="left:151px;top:289px;width:5px;height:5px;background:#4183f6"></div>
<div style="left:156px;top:289px;width:5px;height:5px;background:#4183f6"></div>
<div style="left:161px;top:289px;width:5px;height:5px;background:#4183f6"></div>
<div style="left:166px;top:289px;width:5px;height:5px;background:#4183f6"></div>
<div style="left:171px;top:289px;width:5px;height:5px;background:#4183f6"></div>
<div style="left:176px;top:289px;width:5px;height:5px;background:#4183f6"></div>
<div style="left:181px;top:289px;width:4px;height:5px;background:#4183f6"></div>
<div style="left:41px;top:294px;width:5px;height:5px;background:#578cea"></div>
<div style="left:46px;top:294px;width:5px;height:5px;background:#578cea"></div>
<div style="left:51px;top:294px;width:5px;height:5px;background:#578cea"></div>
<div style="left:56px;top:294px;width:5px;height:5px;background:#578cea"></div>
<div style="left:61px;top:294px;width:5px;height:5px;background:#578cea"></div>
<div style="left:66px;top:294px;width:5px;height:5px;background:#578cea"></div>
<div style="left:71px;top:294px;width:5px;height:5px;background:#578cea"></div>
<div style="left:76px;top:294px;width:5px;height:5px;background:#578cea"></div>
<div style="left:81px;top:294px;width:5px;height:5px;background:#578cea"></div>
<div style="left:86px;top:294px;width:5px;height:5px;background:#578cea"></div>
<div style="left:91px;top:294px;width:5px;height:5px;background:#578cea"></div>
<div style="left:96px;top:294px;width:5px;height:5px;background:#578cea"></div>
<div style="left:101px;top:294px;width:5px;height:5px;background:#578cea"></div>
<div style="left:106px;top:294px;width:5px;height:5px;background:#578cea"></div>
<div style="left:111px;top:294px;width:5px;height:5px;background:#578cea"></div>
<div style="left:116px;top:294px;width:5px;height:5px;background:#578cea"></div>
<div style="left:121px;top:294px;width:5px;height:5px;background:#578cea"></div>
<div style="left:126px;top:294px;width:5px;height:5px;background:#578cea"></div>
<div style="left:131px;top:294px;width:5px;height:5px;background:#578cea"></div>
<div style="left:136px;top:294px;width:5px;height:5px;background:#578cea"></div>
<div style="left:141px;top:294px;width:5px;height:5px;background:#578cea"></div>
<div style="left:146px;top:294px;width:5px;height:5px;background:#578cea"></div>
<div style="left:151px;top:294px;width:5px;height:5px;background:#578cea"></div>
<div style="left:156px;top:294px;width:5px;height:5px;background:#578cea"></div>
<div style="left:161px;top:294px;width:5px;height:5px;background:#578cea"></div>
<div style="left:166px;top:294px;width:5px;height:5px;background:#578cea"></div>
<div style="left:171px;top:294px;width:5px;height:5px;background:#578cea"></div>
<div style="left:176px;top:294px;width:5px;height:5px;background:#578cea"></div>
<div style="left:181px;top:294px;width:4px;height:5px;background:#578cea"></div>
<div style="left:41px;top:299px;width:5px;height:5px;background:#cad9f5"></div>
<div style="left:46px;top:299px;width:5px;height:5px;background:#cad9f5"></div>
<div style="left:51px;top:299px;width:5px;height:5px;background:#cad9f5"></div>
<div style="left:56px;top:299px;width:5px;height:5px;background:#cad9f5"></div>
<div style="left:61px;top:299px;width:5px;height:5px;background:#cad9f5"></div>
<div style="left:66px;top:299px;width:5px;height:5px;background:#cad9f5"></div>
<div style="left:71px;top:299px;width:5px;height:5px;background:#cad9f5"></div>
<div style="left:76px;top:299px;width:5px;height:5px;background:#cad9f5"></div>
<div style="left:81px;top:299px;width:5px;height:5px;background:#cad9f5"></div>
<div style="left:86px;top:299px;width:5px;height:5px;background:#cad9f5"></div>
<div style="left:91px;top:299px;width:5px;height:5px;background:#cad9f5"></div>
<div style="left:96px;top:299px;width:5px;height:5px;background:#cad9f5"></div>
<div style="left:101px;top:299px;width:5px;height:5px;background:#cad9f5"></div>
<div style="left:106px;top:299px;width:5px;height:5px;background:#cad9f5"></div>
<div style="left:111px;top:299px;width:5px;height:5px;background:#cad9f5"></div>
<div style="left:116px;top:299px;width:5px;height:5px;background:#cad9f5"></div>
<div style="left:121px;top:299px;width:5px;height:5px;background:#cad9f5"></div>
<div style="left:126px;top:299px;width:5px;height:5px;background:#cad9f5"></div>
<div style="left:131px;top:299px;width:5px;height:5px;background:#cad9f5"></div>
<div style="left:136px;top:299px;width:5px;height:5px;background:#cad9f5"></div>
<div style="left:141px;top:299px;width:5px;height:5px;background:#cad9f5"></div>
<div style="left:146px;top:299px;width:5px;height:5px;background:#cad9f5"></div>
<div style="left:151px;top:299px;width:5px;height:5px;background:#cad9f5"></div>
<div style="left:156px;top:299px;width:5px;height:5px;background:#cad9f5"></div>
<div style="left:161px;top:299px;width:5px;height:5px;background:#cad9f5"></div>
<div style="left:166px;top:299px;width:5px;height:5px;background:#cad9f5"></div>
<div style="left:171px;top:299px;width:5px;height:5px;background:#cad9f5"></div>
<div style="left:176px;top:299px;width:5px;height:5px;background:#cad9f5"></div>
<div style="left:181px;top:299px;width:4px;height:5px;background:#cad9f5"></div>
<div style="left:41px;top:304px;width:5px;height:5px;background:#6b7791"></div>
<div style="left:46px;top:304px;width:5px;height:5px;background:#acbbd1"></div>
<div style="left:51px;top:304px;width:5px;height:5px;background:#8e91a9"></div>
<div style="left:56px;top:304px;width:5px;height:5px;background:#a6aec2"></div>
<div style="left:61px;top:304px;width:5px;height:5px;background:#78757c"></div>
<div style="left:66px;top:304px;width:5px;height:5px;background:#9eafc4"></div>
<div style="left:71px;top:304px;width:5px;height:5px;background:#5a7180"></div>
<div style="left:76px;top:304px;width:5px;height:5px;background:#717b96"></div>
<div style="left:81px;top:304px;width:5px;height:5px;background:#a5b7d1"></div>
<div style="left:86px;top:304px;width:5px;height:5px;background:#b3b9ce"></div>
<div style="left:91px;top:304px;width:5px;height:5px;background:#a5b2cf"></div>
<div style="left:96px;top:304px;width:5px;height:5px;background:#6b827e"></div>
<div style="left:101px;top:304px;width:5px;height:5px;background:#776f95"></div>
<div style="left:106px;top:304px;width:5px;height:5px;background:#abb1bd"></div>
<div style="left:111px;top:304px;width:5px;height:5px;background:#cad9f5"></div>
<div style="left:116px;top:304px;width:5px;height:5px;background:#cad9f5"></div>
<div style="left:121px;top:304px;width:5px;height:5px;background:#cad9f5"></div>
<div style="left:126px;top:304px;width:5px;height:5px;background:#cad9f5"></div>
<div style="left:131px;top:304px;width:5px;height:5px;background:#cad9f5"></div>
<div style="left:136px;top:304px;width:5px;height:5px;background:#cad9f5"></div>
<div style="left:141px;top:304px;width:5px;height:5px;background:#cad9f5"></div>
<div style="left:146px;top:304px;width:5px;height:5px;background:#cad9f5"></div>
<div style="left:151px;top:304px;width:5px;height:5px;background:#cad9f5"></div>
<div style="left:156px;top:304px;width:5px;height:5px;background:#cad9f5"></div>
<div style="left:161px;top:304px;width:5px;height:5px;background:#cad9f5"></div>
<div style="left:166px;top:304px;width:5px;height:5px;background:#cad9f5"></div>
<div style="left:171px;top:304px;width:5px;height:5px;background:#cad9f5"></div>
<div style="left:176px;top:304px;width:5px;height:5px;background:#cad9f5"></div>
<div style="left:181px;top:304px;width:4px;height:5px;background:#cad9f5"></div>
<div style="left:41px;top:309px;width:5px;height:5px;background:#8e8fb4"></div>
<div style="left:46px;top:309px;width:5px;height:5px;background:#aec0d8"></div>
<div style="left:51px;top:309px;width:5px;height:5px;background:#9d9cad"></div>
<div style="left:56px;top:309px;width:5px;height:5px;background:#a6b1ca"></div>
<div style="left:61px;top:309px;width:5px;height:5px;background:#a0b0cd"></div>
<div style="left:66px;top:309px;width:5px;height:5px;background:#a8b1c9"></div>
<div style="left:71px;top:309px;width:5px;height:5px;background:#9faac3"></div>
<div style="left:76px;top:309px;width:5px;height:5px;background:#a6b9d0"></div>
<div style="left:81px;top:309px;width:5px;height:5px;background:#b0b1c6"></div>
<div style="left:86px;top:309px;width:5px;height:5px;background:#8fabbd"></div>
<div style="left:91px;top:309px;width:5px;height:5px;background:#99abc4"></div>
<div style="left:96px;top:309px;width:5px;height:5px;background:#96a8b4"></div>
<div style="left:101px;top:309px;width:5px;height:5px;background:#a7afca"></div>
<div style="left:106px;top:309px;width:5px;height:5px;background:#a099bc"></div>
<div style="left:111px;top:309px;width:5px;height:5px;background:#cad9f5"></div>
<div style="left:116px;top:309px;width:5px;height:5px;background:#cad9f5"></div>
<div style="left:121px;top:309px;width:5px;height:5px;background:#cad9f5"></div>
<div style="left:126px;top:309px;width:5px;height:5px;background:#cad9f5"></div>
<div style="left:131px;top:309px;width:5px;height:5px;background:#cad9f5"></div>
<div style="left:136px;top:309px;width:5px;height:5px;background:#cad9f5"></div>
<div style="left:141px;top:309px;width:5px;height:5px;background:#cad9f5"></div>
<div style="left:146px;top:309px;width:5px;height:5px;background:#cad9f5"></div>
<div style="left:151px;top:309px;width:5px;height:5px;background:#cad9f5"></div>
<div style="left:156px;top:309px;width:5px;height:5px;background:#cad9f5"></div>
<div style="left:161px;top:309px;width:5px;height:5px;background:#cad9f5"></div>
<div style="left:166px;top:309px;width:5px;height:5px;background:#cad9f5"></div>
<div style="left:171px;top:309px;width:5px;height:5px;background:#cad9f5"></div>
<div style="left:176px;top:309px;width:5px;height:5px;background:#cad9f5"></div>
<div style="left:181px;top:309px;width:4px;height:5px;background:#cad9f5"></div>
<div style="left:41px;top:314px;width:5px;height:5px;background:#d1d7e7"></div>
<div style="left:46px;top:314px;width:5px;height:5px;background:#d1d7e7"></div>
<div style="left:51px;top:314px;width:5px;height:5px;background:#d1d7e7"></div>
<div style="left:56px;top:314px;width:5px;height:5px;background:#d1d7e7"></div>
<div style="left:61px;top:314px;width:5px;height:5px;background:#d1d7e7"></div>
<div style="left:66px;top:314px;width:5px;height:5px;background:#d1d7e7"></div>
<div style="left:71px;top:314px;width:5px;height:5px;background:#d1d7e7"></div>
<div style="left:76px;top:314px;width:5px;height:5px;background:#d1d7e7"></div>
<div style="left:81px;top:314px;width:5px;height:5px;background:#d1d7e7"></div>
<div style="left:86px;top:314px;width:5px;height:5px;background:#d1d7e7"></div>
<div style="left:91px;top:314px;width:5px;height:5px;background:#d1d7e7"></div>
<div style="left:96px;top:314px;width:5px;height:5px;background:#d1d7e7"></div>
<div style="left:101px;top:314px;width:5px;height:5px;background:#d1d7e7"></div>
<div style="left:106px;top:314px;width:5px;height:5px;background:#d1d7e7"></div>
<div style="left:111px;top:314px;width:5px;height:5px;background:#d1d7e7"></div>
<div style="left:116px;top:314px;width:5px;height:5px;background:#d1d7e7"></div>
<div style="left:121px;top:314px;width:5px;height:5px;background:#d1d7e7"></div>
<div style="left:126px;top:314px;width:5px;height:5px;background:#d1d7e7"></div>
<div style="left:131px;top:314px;width:5px;height:5px;background:#d1d7e7"></div>
<div style="left:136px;top:314px;width:5px;height:5px;background:#d1d7e7"></div>
<div style="left:141px;top:314px;width:5px;height:5px;background:#d1d7e7"></div>
<div style="left:146px;top:314px;width:5px;height:5px;background:#d1d7e7"></div>
<div style="left:151px;top:314px;width:5px;height:5px;background:#d1d7e7"></div>
<div style="left:156px;top:314px;width:5px;height:5px;background:#d1d7e7"></div>
<div style="left:161px;top:314px;width:5px;height:5px;background:#d1d7e7"></div>
<div style="left:166px;top:314px;width:5px;height:5px;background:#d1d7e7"></div>
<div style="left:171px;top:314px;width:5px;height:5px;background:#d1d7e7"></div>
<div style="left:176px;top:314px;width:5px;height:5px;background:#d1d7e7"></div>
<div style="left:181px;top:314px;width:4px;height:5px;background:#d1d7e7"></div>
<div style="left:41px;top:319px;width:5px;height:5px;background:#d2cac9"></div>
<div style="left:46px;top:319px;width:5px;height:5px;background:#a2b4c6"></div>
<div style="left:51px;top:319px;width:5px;height:5px;background:#b6bed2"></div>
<div style="left:56px;top:319px;width:5px;height:5px;background:#b5bad0"></div>
<div style="left:61px;top:319px;width:5px;height:5px;background:#b6aeb2"></div>
<div style="left:66px;top:319px;width:5px;height:5px;background:#d0c2c8"></div>
<div style="left:71px;top:319px;width:5px;height:5px;background:#e8e8f0"></div>
<div style="left:76px;top:319px;width:5px;height:5px;background:#d0d4e7"></div>
<div style="left:81px;top:319px;width:5px;height:5px;background:#d8cbd0"></div>
<div style="left:86px;top:319px;width:5px;height:5px;background:#c5cdd9"></div>
<div style="left:91px;top:319px;width:5px;height:5px;background:#bbbebf"></div>
<div style="left:96px;top:319px;width:5px;height:5px;background:#c0bfc1"></div>
<div style="left:101px;top:319px;width:5px;height:5px;background:#cac5ce"></div>
<div style="left:106px;top:319px;width:5px;height:5px;background:#c2b3b8"></div>
<div style="left:111px;top:319px;width:5px;height:5px;background:#cacdd8"></div>
<div style="left:116px;top:319px;width:5px;height:5px;background:#bcbfcd"></div>
<div style="left:121px;top:319px;width:5px;height:5px;background:#e8e8f0"></div>
<div style="left:126px;top:319px;width:5px;height:5px;background:#e8e8f0"></div>
<div style="left:131px;top:319px;width:5px;height:5px;background:#e8e8f0"></div>
<div style="left:136px;top:319px;width:5px;height:5px;background:#e8e8f0"></div>
<div style="left:141px;top:319px;width:5px;height:5px;background:#e8e8f0"></div>
<div style="left:146px;top:319px;width:5px;height:5px;background:#e8e8f0"></div>
<div style="left:151px;top:319px;width:5px;height:5px;background:#e8e8f0"></div>
<div style="left:156px;top:319px;width:5px;height:5px;background:#e8e8f0"></div>
<div style="left:161px;top:319px;width:5px;height:5px;background:#e8e8f0"></div>
<div style="left:166px;top:319px;width:5px;height:5px;background:#e8e8f0"></div>
<div style="left:171px;top:319px;width:5px;height:5px;background:#e8e8f0"></div>
<div style="left:176px;top:319px;width:5px;height:5px;background:#e8e8f0"></div>
<div style="left:181px;top:319px;width:4px;height:5px;background:#e8e8f0"></div>
<div style="left:41px;top:324px;width:5px;height:5px;background:#c3bbbd"></div>
<div style="left:46px;top:324px;width:5px;height:5px;background:#aba9b4"></div>
<div style="left:51px;top:324px;width:5px;height:5px;background:#8c8c97"></div>
<div style="left:56px;top:324px;width:5px;height:5px;background:#7c897c"></div>
<div style="left:61px;top:324px;width:5px;height:5px;background:#909c98"></div>
<div style="left:66px;top:324px;width:5px;height:5px;background:#9f9bb7"></div>
<div style="left:71px;top:324px;width:5px;height:5px;background:#e8e8f0"></div>
<div style="left:76px;top:324px;width:5px;height:5px;background:#a8abc5"></div>
<div style="left:81px;top:324px;width:5px;height:5px;background:#aaa5ad"></div>
<div style="left:86px;top:324px;width:5px;height:5px;background:#896d70"></div>
<div style="left:91px;top:324px;width:5px;height:5px;background:#bea9ba"></div>
<div style="left:96px;top:324px;width:5px;height:5px;background:#8f939d"></div>
<div style="left:101px;top:324px;width:5px;height:5px;background:#878a95"></div>
<div style="left:106px;top:324px;width:5px;height:5px;background:#b4a1a1"></div>
<div style="left:111px;top:324px;width:5px;height:5px;background:#8c7870"></div>
<div style="left:116px;top:324px;width:5px;height:5px;background:#af96a1"></div>
<div style="left:121px;top:324px;width:5px;height:5px;background:#e8e8f0"></div>
<div style="left:126px;top:324px;width:5px;height:5px;background:#e8e8f0"></div>
<div style="left:131px;top:324px;width:5px;height:5px;background:#e8e8f0"></div>
<div style="left:136px;top:324px;width:5px;height:5px;background:#e8e8f0"></div>
<div style="left:141px;top:324px;width:5px;height:5px;background:#e8e8f0"></div>
<div style="left:146px;top:324px;width:5px;height:5px;background:#e8e8f0"></div>
<div style="left:151px;top:324px;width:5px;height:5px;background:#e8e8f0"></div>
<div style="left:156px;top:324px;width:5px;height:5px;background:#e8e8f0"></div>
<div style="left:161px;top:324px;width:5px;height:5px;background:#e8e8f0"></div>
<div style="left:166px;top:324px;width:5px;height:5px;background:#e8e8f0"></div>
<div style="left:171px;top:324px;width:5px;height:5px;background:#e8e8f0"></div>
<div style="left:176px;top:324px;width:5px;height:5px;background:#e8e8f0"></div>
<div style="left:181px;top:324px;width:4px;height:5px;background:#e8e8f0"></div>
<div style="left:41px;top:329px;width:5px;height:5px;background:#c9cdd5"></div>
<div style="left:46px;top:329px;width:5px;height:5px;background:#dcdbe4"></div>
<div style="left:51px;top:329px;width:5px;height:5px;background:#c8c8d2"></div>
<div style="left:56px;top:329px;width:5px;height:5px;background:#e2d6d8"></div>
<div style="left:61px;top:329px;width:5px;height:5px;background:#e2dce0"></div>
<div style="left:66px;top:329px;width:5px;height:5px;background:#c8c9d9"></div>
<div style="left:71px;top:329px;width:5px;height:5px;background:#e8e8f0"></div>
<div style="left:76px;top:329px;width:5px;height:5px;background:#d4d3dc"></div>
<div style="left:81px;top:329px;width:5px;height:5px;background:#d4cfcc"></div>
<div style="left:86px;top:329px;width:5px;height:5px;background:#c5cad9"></div>
<div style="left:91px;top:329px;width:5px;height:5px;background:#ceced6"></div>
<div style="left:96px;top:329px;width:5px;height:5px;background:#d5cec9"></div>
<div style="left:101px;top:329px;width:5px;height:5px;background:#d8d1d6"></div>
<div style="left:106px;top:329px;width:5px;height:5px;background:#c7c6d4"></div>
<div style="left:111px;top:329px;width:5px;height:5px;background:#d0c6cb"></div>
<div style="left:116px;top:329px;width:5px;height:5px;background:#d2d8ea"></div>
<div style="left:121px;top:329px;width:5px;height:5px;background:#e8e8f0"></div>
<div style="left:126px;top:329px;width:5px;height:5px;background:#e8e8f0"></div>
<div style="left:131px;top:329px;width:5px;height:5px;background:#e8e8f0"></div>
<div style="left:136px;top:329px;width:5px;height:5px;background:#e8e8f0"></div>
<div style="left:141px;top:329px;width:5px;height:5px;background:#e8e8f0"></div>
<div style="left:146px;top:329px;width:5px;height:5px;background:#e8e8f0"></div>
<div style="left:151px;top:329px;width:5px;height:5px;background:#e8e8f0"></div>
<div style="left:156px;top:329px;width:5px;height:5px;background:#e8e8f0"></div>
<div style="left:161px;top:329px;width:5px;height:5px;background:#e8e8f0"></div>
<div style="left:166px;top:329px;width:5px;height:5px;background:#e8e8f0"></div>
<div style="left:171px;top:329px;width:5px;height:5px;background:#e8e8f0"></div>
<div style="left:176px;top:329px;width:5px;height:5px;background:#e8e8f0"></div>
<div style="left:181px;top:329px;width:4px;height:5px;background:#e8e8f0"></div>
<div style="left:41px;top:334px;width:5px;height:5px;background:#c5d1e9"></div>
<div style="left:46px;top:334px;width:5px;height:5px;background:#c5d1e9"></div>
<div style="left:51px;top:334px;width:5px;height:5px;background:#c5d1e9"></div>
<div style="left:56px;top:334px;width:5px;height:5px;background:#c5d1e9"></div>
<div style="left:61px;top:334px;width:5px;height:5px;background:#c5d1e9"></div>
<div style="left:66px;top:334px;width:5px;height:5px;background:#c5d1e9"></div>
<div style="left:71px;top:334px;width:5px;height:5px;background:#c5d1e9"></div>
<div style="left:76px;top:334px;width:5px;height:5px;background:#c5d1e9"></div>
<div style="left:81px;top:334px;width:5px;height:5px;background:#c5d1e9"></div>
<div style="left:86px;top:334px;width:5px;height:5px;background:#c5d1e9"></div>
<div style="left:91px;top:334px;width:5px;height:5px;background:#c5d1e9"></div>
<div style="left:96px;top:334px;width:5px;height:5px;background:#c5d1e9"></div>
<div style="left:101px;top:334px;width:5px;height:5px;background:#c5d1e9"></div>
<div style="left:106px;top:334px;width:5px;height:5px;background:#c5d1e9"></div>
<div style="left:111px;top:334px;width:5px;height:5px;background:#c5d1e9"></div>
<div style="left:116px;top:334px;width:5px;height:5px;background:#c5d1e9"></div>
<div style="left:121px;top:334px;width:5px;height:5px;background:#c5d1e9"></div>
<div style="left:126px;top:334px;width:5px;height:5px;background:#c5d1e9"></div>
<div style="left:131px;top:334px;width:5px;height:5px;background:#c5d1e9"></div>
<div style="left:136px;top:334px;width:5px;height:5px;background:#c5d1e9"></div>
<div style="left:141px;top:334px;width:5px;height:5px;background:#c5d1e9"></div>
<div style="left:146px;top:334px;width:5px;height:5px;background:#c5d1e9"></div>
<div style="left:151px;top:334px;width:5px;height:5px;background:#c5d1e9"></div>
<div style="left:156px;top:334px;width:5px;height:5px;background:#c5d1e9"></div>
<div style="left:161px;top:334px;width:5px;height:5px;background:#c5d1e9"></div>
<div style="left:166px;top:334px;width:5px;height:5px;background:#c5d1e9"></div>
<div style="left:171px;top:334px;width:5px;height:5px;background:#c5d1e9"></div>
<div style="left:176px;top:334px;width:5px;height:5px;background:#c5d1e9"></div>
<div style="left:181px;top:334px;width:4px;height:5px;background:#c5d1e9"></div>
<div style="left:41px;top:339px;width:5px;height:5px;background:#8e9c9b"></div>
<div style="left:46px;top:339px;width:5px;height:5px;background:#8a8b86"></div>
<div style="left:51px;top:339px;width:5px;height:5px;background:#b0b5cd"></div>
<div style="left:56px;top:339px;width:5px;height:5px;background:#a2a2b0"></div>
<div style="left:61px;top:339px;width:5px;height:5px;background:#9da0af"></div>
<div style="left:66px;top:339px;width:5px;height:5px;background:#95abce"></div>
<div style="left:71px;top:339px;width:5px;height:5px;background:#72778c"></div>
<div style="left:76px;top:339px;width:5px;height:5px;background:#a7b4c9"></div>
<div style="left:81px;top:339px;width:5px;height:5px;background:#a1aacd"></div>
<div style="left:86px;top:339px;width:5px;height:5px;background:#8784a8"></div>
<div style="left:91px;top:339px;width:5px;height:5px;background:#9087a1"></div>
<div style="left:96px;top:339px;width:5px;height:5px;background:#8883a4"></div>
<div style="left:101px;top:339px;width:5px;height:5px;background:#8e908c"></div>
<div style="left:106px;top:339px;width:5px;height:5px;background:#cad9f5"></div>
<div style="left:111px;top:339px;width:5px;height:5px;background:#cad9f5"></div>
<div style="left:116px;top:339px;width:5px;height:5px;background:#cad9f5"></div>
<div style="left:121px;top:339px;width:5px;height:5px;background:#cad9f5"></div>
<div style="left:126px;top:339px;width:5px;height:5px;background:#cad9f5"></div>
<div style="left:131px;top:339px;width:5px;height:5px;background:#cad9f5"></div>
<div style="left:136px;top:339px;width:5px;height:5px;background:#cad9f5"></div>
<div style="left:141px;top:339px;width:5px;height:5px;background:#cad9f5"></div>
<div style="left:146px;top:339px;width:5px;height:5px;background:#cad9f5"></div>
<div style="left:151px;top:339px;width:5px;height:5px;background:#cad9f5"></div>
<div style="left:156px;top:339px;width:5px;height:5px;background:#cad9f5"></div>
<div style="left:161px;top:339px;width:5px;height:5px;background:#cad9f5"></div>
<div style="left:166px;top:339px;width:5px;height:5px;background:#cad9f5"></div>
<div style="left:171px;top:339px;width:5px;height:5px;background:#cad9f5"></div>
<div style="left:176px;top:339px;width:5px;height:5px;background:#cad9f5"></div>
<div style="left:181px;top:339px;width:4px;height:5px;background:#cad9f5"></div>
<div style="left:41px;top:344px;width:5px;height:5px;background:#a5b5d0"></div>
<div style="left:46px;top:344px;width:5px;height:5px;background:#a8b4ca"></div>
<div style="left:51px;top:344px;width:5px;height:5px;background:#9da7c0"></div>
<div style="left:56px;top:344px;width:5px;height:5px;background:#718196"></div>
<div style="left:61px;top:344px;width:5px;height:5px;background:#9aafca"></div>
<div style="left:66px;top:344px;width:5px;height:5px;background:#a9acc7"></div>
<div style="left:71px;top:344px;width:5px;height:5px;background:#999aa0"></div>
<div style="left:76px;top:344px;width:5px;height:5px;background:#8a9ab5"></div>
<div style="left:81px;top:344px;width:5px;height:5px;background:#80829a"></div>
<div style="left:86px;top:344px;width:5px;height:5px;background:#9592a0"></div>
<div style="left:91px;top:344px;width:5px;height:5px;background:#a4b2ce"></div>
<div style="left:96px;top:344px;width:5px;height:5px;background:#7880aa"></div>
<div style="left:101px;top:344px;width:5px;height:5px;background:#aab7cf"></div>
<div style="left:106px;top:344px;width:5px;height:5px;background:#cad9f5"></div>
<div style="left:111px;top:344px;width:5px;height:5px;background:#cad9f5"></div>
<div style="left:116px;top:344px;width:5px;height:5px;background:#cad9f5"></div>
<div style="left:121px;top:344px;width:5px;height:5px;background:#cad9f5"></div>
<div style="left:126px;top:344px;width:5px;height:5px;background:#cad9f5"></div>
<div style="left:131px;top:344px;width:5px;height:5px;background:#cad9f5"></div>
<div style="left:136px;top:344px;width:5px;height:5px;background:#cad9f5"></div>
<div style="left:141px;top:344px;width:5px;height:5px;background:#cad9f5"></div>
<div style="left:146px;top:344px;width:5px;height:5px;background:#cad9f5"></div>
<div style="left:151px;top:344px;width:5px;height:5px;background:#cad9f5"></div>
<div style="left:156px;top:344px;width:5px;height:5px;background:#cad9f5"></div>
<div style="left:161px;top:344px;width:5px;height:5px;background:#cad9f5"></div>
<div style="left:166px;top:344px;width:5px;height:5px;background:#cad9f5"></div>
<div style="left:171px;top:344px;width:5px;height:5px;background:#cad9f5"></div>
<div style="left:176px;top:344px;width:5px;height:5px;background:#cad9f5"></div>
<div style="left:181px;top:344px;width:4px;height:5px;background:#cad9f5"></div>
<div style="left:41px;top:349px;width:5px;height:5px;background:#cbd4e8"></div>
<div style="left:46px;top:349px;width:5px;height:5px;background:#cbd4e8"></div>
<div style="left:51px;top:349px;width:5px;height:5px;background:#cbd4e8"></div>
<div style="left:56px;top:349px;width:5px;height:5px;background:#cbd4e8"></div>
<div style="left:61px;top:349px;width:5px;height:5px;background:#cbd4e8"></div>
<div style="left:66px;top:349px;width:5px;height:5px;background:#cbd4e8"></div>
<div style="left:71px;top:349px;width:5px;height:5px;background:#cbd4e8"></div>
<div style="left:76px;top:349px;width:5px;height:5px;background:#cbd4e8"></div>
<div style="left:81px;top:349px;width:5px;height:5px;background:#cbd4e8"></div>
<div style="left:86px;top:349px;width:5px;height:5px;background:#cbd4e8"></div>
<div style="left:91px;top:349px;width:5px;height:5px;background:#cbd4e8"></div>
<div style="left:96px;top:349px;width:5px;height:5px;background:#cbd4e8"></div>
<div style="left:101px;top:349px;width:5px;height:5px;background:#cbd4e8"></div>
<div style="left:106px;top:349px;width:5px;height:5px;background:#cbd4e8"></div>
<div style="left:111px;top:349px;width:5px;height:5px;background:#cbd4e8"></div>
<div style="left:116px;top:349px;width:5px;height:5px;background:#cbd4e8"></div>
<div style="left:121px;top:349px;width:5px;height:5px;background:#cbd4e8"></div>
<div style="left:126px;top:349px;width:5px;height:5px;background:#cbd4e8"></div>
<div style="left:131px;top:349px;width:5px;height:5px;background:#cbd4e8"></div>
<div style="left:136px;top:349px;width:5px;height:5px;background:#cbd4e8"></div>
<div style="left:141px;top:349px;width:5px;height:5px;background:#cbd4e8"></div>
<div style="left:146px;top:349px;width:5px;height:5px;background:#cbd4e8"></div>
<div style="left:151px;top:349px;width:5px;height:5px;background:#cbd4e8"></div>
<div style="left:156px;top:349px;width:5px;height:5px;background:#cbd4e8"></div>
<div style="left:161px;top:349px;width:5px;height:5px;background:#cbd4e8"></div>
<div style="left:166px;top:349px;width:5px;height:5px;background:#cbd4e8"></div>
<div style="left:171px;top:349px;width:5px;height:5px;background:#cbd4e8"></div>
<div style="left:176px;top:349px;width:5px;height:5px;background:#cbd4e8"></div>
<div style="left:181px;top:349px;width:4px;height:5px;background:#cbd4e8"></div>
<div style="left:41px;top:354px;width:5px;height:5px;background:#dad7dd"></div>
<div style="left:46px;top:354px;width:5px;height:5px;background:#cfd4e1"></div>
<div style="left:51px;top:354px;width:5px;height:5px;background:#cbcbd1"></div>
<div style="left:56px;top:354px;width:5px;height:5px;background:#cacbdb"></div>
<div style="left:61px;top:354px;width:5px;height:5px;background:#d8daea"></div>
<div style="left:66px;top:354px;width:5px;height:5px;background:#cdced6"></div>
<div style="left:71px;top:354px;width:5px;height:5px;background:#cdd2df"></div>
<div style="left:76px;top:354px;width:5px;height:5px;background:#cdcbd9"></div>
<div style="left:81px;top:354px;width:5px;height:5px;background:#d0c9d1"></div>
<div style="left:86px;top:354px;width:5px;height:5px;background:#cacbdb"></div>
<div style="left:91px;top:354px;width:5px;height:5px;background:#d7dcea"></div>
<div style="left:96px;top:354px;width:5px;height:5px;background:#d7dfee"></div>
<div style="left:101px;top:354px;width:5px;height:5px;background:#d8d8e3"></div>
<div style="left:106px;top:354px;width:5px;height:5px;background:#e8e8f0"></div>
<div style="left:111px;top:354px;width:5px;height:5px;background:#e8e8f0"></div>
<div style="left:116px;top:354px;width:5px;height:5px;background:#e8e8f0"></div>
<div style="left:121px;top:354px;width:5px;height:5px;background:#e8e8f0"></div>
<div style="left:126px;top:354px;width:5px;height:5px;background:#e8e8f0"></div>
<div style="left:131px;top:354px;width:5px;height:5px;background:#e8e8f0"></div>
<div style="left:136px;top:354px;width:5px;height:5px;background:#e8e8f0"></div>
<div style="left:141px;top:354px;width:5px;height:5px;background:#e8e8f0"></div>
<div style="left:146px;top:354px;width:5px;height:5px;background:#e8e8f0"></div>
<div style="left:151px;top:354px;width:5px;height:5px;background:#e8e8f0"></div>
<div style="left:156px;top:354px;width:5px;height:5px;background:#e8e8f0"></div>
<div style="left:161px;top:354px;width:5px;height:5px;background:#e8e8f0"></div>
<div style="left:166px;top:354px;width:5px;height:5px;background:#e8e8f0"></div>
<div style="left:171px;top:354px;width:5px;height:5px;background:#e8e8f0"></div>
<div style="left:176px;top:354px;width:5px;height:5px;background:#e8e8f0"></div>
<div style="left:181px;top:354px;width:4px;height:5px;background:#e8e8f0"></div>
<div style="left:41px;top:359px;width:5px;height:5px;background:#8f88a3"></div>
<div style="left:46px;top:359px;width:5px;height:5px;background:#a3a1bb"></div>
<div style="left:51px;top:359px;width:5px;height:5px;background:#88798a"></div>
<div style="left:56px;top:359px;width:5px;height:5px;background:#8b8a8a"></div>
<div style="left:61px;top:359px;width:5px;height:5px;background:#bac2ca"></div>
<div style="left:66px;top:359px;width:5px;height:5px;background:#b6afb4"></div>
<div style="left:71px;top:359px;width:5px;height:5px;background:#ada89e"></div>
<div style="left:76px;top:359px;width:5px;height:5px;background:#6f899b"></div>
<div style="left:81px;top:359px;width:5px;height:5px;background:#9da5b4"></div>
<div style="left:86px;top:359px;width:5px;height:5px;background:#7d8797"></div>
<div style="left:91px;top:359px;width:5px;height:5px;background:#ada3a0"></div>
<div style="left:96px;top:359px;width:5px;height:5px;background:#a3a4b0"></div>
<div style="left:101px;top:359px;width:5px;height:5px;background:#9ba2a3"></div>
<div style="left:106px;top:359px;width:5px;height:5px;background:#e8e8f0"></div>
<div style="left:111px;top:359px;width:5px;height:5px;background:#e8e8f0"></div>
<div style="left:116px;top:359px;width:5px;height:5px;background:#e8e8f0"></div>
<div style="left:121px;top:359px;width:5px;height:5px;background:#e8e8f0"></div>
<div style="left:126px;top:359px;width:5px;height:5px;background:#e8e8f0"></div>
<div style="left:131px;top:359px;width:5px;height:5px;background:#e8e8f0"></div>
<div style="left:136px;top:359px;width:5px;height:5px;background:#e8e8f0"></div>
<div style="left:141px;top:359px;width:5px;height:5px;background:#e8e8f0"></div>
<div style="left:146px;top:359px;width:5px;height:5px;background:#e8e8f0"></div>
<div style="left:151px;top:359px;width:5px;height:5px;background:#e8e8f0"></div>
<div style="left:156px;top:359px;width:5px;height:5px;background:#e8e8f0"></div>
<div style="left:161px;top:359px;width:5px;height:5px;background:#e8e8f0"></div>
<div style="left:166px;top:359px;width:5px;height:5px;background:#e8e8f0"></div>
<div style="left:171px;top:359px;width:5px;height:5px;background:#e8e8f0"></div>
<div style="left:176px;top:359px;width:5px;height:5px;background:#e8e8f0"></div>
<div style="left:181px;top:359px;width:4px;height:5px;background:#e8e8f0"></div>
<div style="left:41px;top:364px;width:5px;height:5px;background:#d2d5e7"></div>
<div style="left:46px;top:364px;width:5px;height:5px;background:#c0bebf"></div>
<div style="left:51px;top:364px;width:5px;height:5px;background:#b5bdc6"></div>
<div style="left:56px;top:364px;width:5px;height:5px;background:#dad5d8"></div>
<div style="left:61px;top:364px;width:5px;height:5px;background:#d9ccca"></div>
<div style="left:66px;top:364px;width:5px;height:5px;background:#d5d4db"></div>
<div style="left:71px;top:364px;width:5px;height:5px;background:#c0bac6"></div>
<div style="left:76px;top:364px;width:5px;height:5px;background:#cbc1c5"></div>
<div style="left:81px;top:364px;width:5px;height:5px;background:#d6d2d2"></div>
<div style="left:86px;top:364px;width:5px;height:5px;background:#c8c8cb"></div>
<div style="left:91px;top:364px;width:5px;height:5px;background:#cecacd"></div>
<div style="left:96px;top:364px;width:5px;height:5px;background:#bfbbb6"></div>
<div style="left:101px;top:364px;width:5px;height:5px;background:#beb6be"></div>
<div style="left:106px;top:364px;width:5px;height:5px;background:#e8e8f0"></div>
<div style="left:111px;top:364px;width:5px;height:5px;background:#e8e8f0"></div>
<div style="left:116px;top:364px;width:5px;height:5px;background:#e8e8f0"></div>
<div style="left:121px;top:364px;width:5px;height:5px;background:#e8e8f0"></div>
<div style="left:126px;top:364px;width:5px;height:5px;background:#e8e8f0"></div>
<div style="left:131px;top:364px;width:5px;height:5px;background:#e8e8f0"></div>
<div style="left:136px;top:364px;width:5px;height:5px;background:#e8e8f0"></div>
<div style="left:141px;top:364px;width:5px;height:5px;background:#e8e8f0"></div>
<div style="left:146px;top:364px;width:5px;height:5px;background:#e8e8f0"></div>
<div style="left:151px;top:364px;width:5px;height:5px;background:#e8e8f0"></div>
<div style="left:156px;top:364px;width:5px;height:5px;background:#e8e8f0"></div>
<div style="left:161px;top:364px;width:5px;height:5px;background:#e8e8f0"></div>
<div style="left:166px;top:364px;width:5px;height:5px;background:#e8e8f0"></div>
<div style="left:171px;top:364px;width:5px;height:5px;background:#e8e8f0"></div>
<div style="left:176px;top:364px;width:5px;height:5px;background:#e8e8f0"></div>
<div style="left:181px;top:364px;width:4px;height:5px;background:#e8e8f0"></div>
<div style="left:41px;top:369px;width:5px;height:5px;background:#cbd4e8"></div>
<div style="left:46px;top:369px;width:5px;height:5px;background:#cbd4e8"></div>
<div style="left:51px;top:369px;width:5px;height:5px;background:#cbd4e8"></div>
<div style="left:56px;top:369px;width:5px;height:5px;background:#cbd4e8"></div>
<div style="left:61px;top:369px;width:5px;height:5px;background:#cbd4e8"></div>
<div style="left:66px;top:369px;width:5px;height:5px;background:#cbd4e8"></div>
<div style="left:71px;top:369px;width:5px;height:5px;background:#cbd4e8"></div>
<div style="left:76px;top:369px;width:5px;height:5px;background:#cbd4e8"></div>
<div style="left:81px;top:369px;width:5px;height:5px;background:#cbd4e8"></div>
<div style="left:86px;top:369px;width:5px;height:5px;background:#cbd4e8"></div>
<div style="left:91px;top:369px;width:5px;height:5px;background:#cbd4e8"></div>
<div style="left:96px;top:369px;width:5px;height:5px;background:#cbd4e8"></div>
<div style="left:101px;top:369px;width:5px;height:5px;background:#cbd4e8"></div>
<div style="left:106px;top:369px;width:5px;height:5px;background:#cbd4e8"></div>
<div style="left:111px;top:369px;width:5px;height:5px;background:#cbd4e8"></div>
<div style="left:116px;top:369px;width:5px;height:5px;background:#cbd4e8"></div>
<div style="left:121px;top:369px;width:5px;height:5px;background:#cbd4e8"></div>
<div style="left:126px;top:369px;width:5px;height:5px;background:#cbd4e8"></div>
<div style="left:131px;top:369px;width:5px;height:5px;background:#cbd4e8"></div>
<div style="left:136px;top:369px;width:5px;height:5px;background:#cbd4e8"></div>
<div style="left:141px;top:369px;width:5px;height:5px;background:#cbd4e8"></div>
<div style="left:146px;top:369px;width:5px;height:5px;background:#cbd4e8"></div>
<div style="left:151px;top:369px;width:5px;height:5px;background:#cbd4e8"></div>
<div style="left:156px;top:369px;width:5px;height:5px;background:#cbd4e8"></div>
<div style="left:161px;top:369px;width:5px;height:5px;background:#cbd4e8"></div>
<div style="left:166px;top:369px;width:5px;height:5px;background:#cbd4e8"></div>
<div style="left:171px;top:369px;width:5px;height:5px;background:#cbd4e8"></div>
<div style="left:176px;top:369px;width:5px;height:5px;background:#cbd4e8"></div>
<div style="left:181px;top:369px;width:4px;height:5px;background:#cbd4e8"></div>
<div style="left:41px;top:374px;width:5px;height:5px;background:#acb9d5"></div>
<div style="left:46px;top:374px;width:5px;height:5px;background:#a1a1b7"></div>
<div style="left:51px;top:374px;width:5px;height:5px;background:#9ea7ce"></div>
<div style="left:56px;top:374px;width:5px;height:5px;background:#97a2b2"></div>
<div style="left:61px;top:374px;width:5px;height:5px;background:#b3c0db"></div>
<div style="left:66px;top:374px;width:5px;height:5px;background:#b0bedc"></div>
<div style="left:71px;top:374px;width:5px;height:5px;background:#9da6b9"></div>
<div style="left:76px;top:374px;width:5px;height:5px;background:#a9bbda"></div>
<div style="left:81px;top:374px;width:5px;height:5px;background:#8693b2"></div>
<div style="left:86px;top:374px;width:5px;height:5px;background:#a5abc9"></div>
<div style="left:91px;top:374px;width:5px;height:5px;background:#cad9f5"></div>
<div style="left:96px;top:374px;width:5px;height:5px;background:#acb5c7"></div>
<div style="left:101px;top:374px;width:5px;height:5px;background:#a8a4bd"></div>
<div style="left:106px;top:374px;width:5px;height:5px;background:#98a5bd"></div>
<div style="left:111px;top:374px;width:5px;height:5px;background:#adb0c4"></div>
<div style="left:116px;top:374px;width:5px;height:5px;background:#cad9f5"></div>
<div style="left:121px;top:374px;width:5px;height:5px;background:#cad9f5"></div>
<div style="left:126px;top:374px;width:5px;height:5px;background:#cad9f5"></div>
<div style="left:131px;top:374px;width:5px;height:5px;background:#cad9f5"></div>
<div style="left:136px;top:374px;width:5px;height:5px;background:#cad9f5"></div>
<div style="left:141px;top:374px;width:5px;height:5px;background:#cad9f5"></div>
<div style="left:146px;top:374px;width:5px;height:5px;background:#cad9f5"></div>
<div style="left:151px;top:374px;width:5px;height:5px;background:#cad9f5"></div>
<div style="left:156px;top:374px;width:5px;height:5px;background:#cad9f5"></div>
<div style="left:161px;top:374px;width:5px;height:5px;background:#cad9f5"></div>
<div style="left:166px;top:374px;width:5px;height:5px;background:#cad9f5"></div>
<div style="left:171px;top:374px;width:5px;height:5px;background:#cad9f5"></div>
<div style="left:176px;top:374px;width:5px;height:5px;background:#cad9f5"></div>
<div style="left:181px;top:374px;width:4px;height:5px;background:#cad9f5"></div>
<div style="left:41px;top:379px;width:5px;height:5px;background:#a39bb1"></div>
<div style="left:46px;top:379px;width:5px;height:5px;background:#a6aeb9"></div>
<div style="left:51px;top:379px;width:5px;height:5px;background:#9292a9"></div>
<div style="left:56px;top:379px;width:5px;height:5px;background:#9fa8c4"></div>
<div style="left:61px;top:379px;width:5px;height:5px;background:#99a6bc"></div>
<div style="left:66px;top:379px;width:5px;height:5px;background:#8d9aac"></div>
<div style="left:71px;top:379px;width:5px;height:5px;background:#959fb3"></div>
<div style="left:76px;top:379px;width:5px;height:5px;background:#9995af"></div>
<div style="left:81px;top:379px;width:5px;height:5px;background:#9587a9"></div>
<div style="left:86px;top:379px;width:5px;height:5px;background:#7a7499"></div>
<div style="left:91px;top:379px;width:5px;height:5px;background:#cad9f5"></div>
<div style="left:96px;top:379px;width:5px;height:5px;background:#a1aec9"></div>
<div style="left:101px;top:379px;width:5px;height:5px;background:#99acba"></div>
<div style="left:106px;top:379px;width:5px;height:5px;background:#787271"></div>
<div style="left:111px;top:379px;width:5px;height:5px;background:#6c7c84"></div>
<div style="left:116px;top:379px;width:5px;height:5px;background:#cad9f5"></div>
<div style="left:121px;top:379px;width:5px;height:5px;background:#cad9f5"></div>
<div style="left:126px;top:379px;width:5px;height:5px;background:#cad9f5"></div>
<div style="left:131px;top:379px;width:5px;height:5px;background:#cad9f5"></div>
<div style="left:136px;top:379px;width:5px;height:5px;background:#cad9f5"></div>
<div style="left:141px;top:379px;width:5px;height:5px;background:#cad9f5"></div>
<div style="left:146px;top:379px;width:5px;height:5px;background:#cad9f5"></div>
<div style="left:151px;top:379px;width:5px;height:5px;background:#cad9f5"></div>
<div style="left:156px;top:379px;width:5px;height:5px;background:#cad9f5"></div>
<div style="left:161px;top:379px;width:5px;height:5px;background:#cad9f5"></div>
<div style="left:166px;top:379px;width:5px;height:5px;background:#cad9f5"></div>
<div style="left:171px;top:379px;width:5px;height:5px;background:#cad9f5"></div>
<div style="left:176px;top:379px;width:5px;height:5px;background:#cad9f5"></div>
<div style="left:181px;top:379px;width:4px;height:5px;background:#cad9f5"></div>
<div style="left:41px;top:384px;width:5px;height:5px;background:#c5d1e9"></div>
<div style="left:46px;top:384px;width:5px;height:5px;background:#c5d1e9"></div>
<div style="left:51px;top:384px;width:5px;height:5px;background:#c5d1e9"></div>
<div style="left:56px;top:384px;width:5px;height:5px;background:#c5d1e9"></div>
<div style="left:61px;top:384px;width:5px;height:5px;background:#c5d1e9"></div>
<div style="left:66px;top:384px;width:5px;height:5px;background:#c5d1e9"></div>
<div style="left:71px;top:384px;width:5px;height:5px;background:#c5d1e9"></div>
<div style="left:76px;top:384px;width:5px;height:5px;background:#c5d1e9"></div>
<div style="left:81px;top:384px;width:5px;height:5px;background:#c5d1e9"></div>
<div style="left:86px;top:384px;width:5px;height:5px;background:#c5d1e9"></div>
<div style="left:91px;top:384px;width:5px;height:5px;background:#c5d1e9"></div>
<div style="left:96px;top:384px;width:5px;height:5px;background:#c5d1e9"></div>
<div style="left:101px;top:384px;width:5px;height:5px;background:#c5d1e9"></div>
<div style="left:106px;top:384px;width:5px;height:5px;background:#c5d1e9"></div>
<div style="left:111px;top:384px;width:5px;height:5px;background:#c5d1e9"></div>
<div style="left:116px;top:384px;width:5px;height:5px;background:#c5d1e9"></div>
<div style="left:121px;top:384px;width:5px;height:5px;background:#c5d1e9"></div>
<div style="left:126px;top:384px;width:5px;height:5px;background:#c5d1e9"></div>
<div style="left:131px;top:384px;width:5px;height:5px;background:#c5d1e9"></div>
<div style="left:136px;top:384px;width:5px;height:5px;background:#c5d1e9"></div>
<div style="left:141px;top:384px;width:5px;height:5px;background:#c5d1e9"></div>
<div style="left:146px;top:384px;width:5px;height:5px;background:#c5d1e9"></div>
<div style="left:151px;top:384px;width:5px;height:5px;background:#c5d1e9"></div>
<div style="left:156px;top:384px;width:5px;height:5px;background:#c5d1e9"></div>
<div style="left:161px;top:384px;width:5px;height:5px;background:#c5d1e9"></div>
<div style="left:166px;top:384px;width:5px;height:5px;background:#c5d1e9"></div>
<div style="left:171px;top:384px;width:5px;height:5px;background:#c5d1e9"></div>
<div style="left:176px;top:384px;width:5px;height:5px;background:#c5d1e9"></div>
<div style="left:181px;top:384px;width:4px;height:5px;background:#c5d1e9"></div>
<div style="left:41px;top:389px;width:5px;height:5px;background:#e8e8f0"></div>
<div style="left:46px;top:389px;width:5px;height:5px;background:#e8e8f0"></div>
<div style="left:51px;top:389px;width:5px;height:5px;background:#e8e8f0"></div>
<div style="left:56px;top:389px;width:5px;height:5px;background:#e8e8f0"></div>
<div style="left:61px;top:389px;width:5px;height:5px;background:#e8e8f0"></div>
<div style="left:66px;top:389px;width:5px;height:5px;background:#e8e8f0"></div>
<div style="left:71px;top:389px;width:5px;height:5px;background:#e8e8f0"></div>
<div style="left:76px;top:389px;width:5px;height:5px;background:#e8e8f0"></div>
<div style="left:81px;top:389px;width:5px;height:5px;background:#e8e8f0"></div>
<div style="left:86px;top:389px;width:5px;height:5px;background:#e8e8f0"></div>
<div style="left:91px;top:389px;width:5px;height:5px;background:#e8e8f0"></div>
<div style="left:96px;top:389px;width:5px;height:5px;background:#e8e8f0"></div>
<div style="left:101px;top:389px;width:5px;height:5px;background:#e8e8f0"></div>
<div style="left:106px;top:389px;width:5px;height:5px;background:#e8e8f0"></div>
<div style="left:111px;top:389px;width:5px;height:5px;background:#e8e8f0"></div>
<div style="left:116px;top:389px;width:5px;height:5px;background:#e8e8f0"></div>
<div style="left:121px;top:389px;width:5px;height:5px;background:#e8e8f0"></div>
<div style="left:126px;top:389px;width:5px;height:5px;background:#e8e8f0"></div>
<div style="left:131px;top:389px;width:5px;height:5px;background:#e8e8f0"></div>
<div style="left:136px;top:389px;width:5px;height:5px;background:#e8e8f0"></div>
<div style="left:141px;top:389px;width:5px;height:5px;background:#e8e8f0"></div>
<div style="left:146px;top:389px;width:5px;height:5px;background:#e8e8f0"></div>
<div style="left:151px;top:389px;width:5px;height:5px;background:#e8e8f0"></div>
<div style="left:156px;top:389px;width:5px;height:5px;background:#e8e8f0"></div>
<div style="left:161px;top:389px;width:5px;height:5px;background:#e8e8f0"></div>
<div style="left:166px;top:389px;width:5px;height:5px;background:#e8e8f0"></div>
<div style="left:171px;top:389px;width:5px;height:5px;background:#e8e8f0"></div>
<div style="left:176px;top:389px;width:5px;height:5px;background:#e8e8f0"></div>
<div style="left:181px;top:389px;width:4px;height:5px;background:#e8e8f0"></div>
<div style="left:41px;top:394px;width:5px;height:5px;background:#827d88"></div>
<div style="left:46px;top:394px;width:5px;height:5px;background:#c1bec5"></div>
<div style="left:51px;top:394px;width:5px;height:5px;background:#a79baa"></div>
<div style="left:56px;top:394px;width:5px;height:5px;background:#a0a4b9"></div>
<div style="left:61px;top:394px;width:5px;height:5px;background:#9a93b6"></div>
<div style="left:66px;top:394px;width:5px;height:5px;background:#afa39e"></div>
<div style="left:71px;top:394px;width:5px;height:5px;background:#7b869b"></div>
<div style="left:76px;top:394px;width:5px;height:5px;background:#a98f96"></div>
<div style="left:81px;top:394px;width:5px;height:5px;background:#6b7294"></div>
<div style="left:86px;top:394px;width:5px;height:5px;background:#71697b"></div>
<div style="left:91px;top:394px;width:5px;height:5px;background:#a2a3b2"></div>
<div style="left:96px;top:394px;width:5px;height:5px;background:#a497a9"></div>
<div style="left:101px;top:394px;width:5px;height:5px;background:#837896"></div>
<div style="left:106px;top:394px;width:5px;height:5px;background:#c1c0d1"></div>
<div style="left:111px;top:394px;width:5px;height:5px;background:#b4b2c3"></div>
<div style="left:116px;top:394px;width:5px;height:5px;background:#959aa1"></div>
<div style="left:121px;top:394px;width:5px;height:5px;background:#9fa1a3"></div>
<div style="left:126px;top:394px;width:5px;height:5px;background:#9e948f"></div>
<div style="left:131px;top:394px;width:5px;height:5px;background:#73829b"></div>
<div style="left:136px;top:394px;width:5px;height:5px;background:#979e9f"></div>
<div style="left:141px;top:394px;width:5px;height:5px;background:#7e7c89"></div>
<div style="left:146px;top:394px;width:5px;height:5px;background:#93799a"></div>
<div style="left:151px;top:394px;width:5px;height:5px;background:#e8e8f0"></div>
<div style="left:156px;top:394px;width:5px;height:5px;background:#7e7a88"></div>
<div style="left:161px;top:394px;width:5px;height:5px;background:#8f8297"></div>
<div style="left:166px;top:394px;width:5px;height:5px;background:#788098"></div>
<div style="left:171px;top:394px;width:5px;height:5px;background:#918da5"></div>
<div style="left:176px;top:394px;width:5px;height:5px;background:#beb6bd"></div>
<div style="left:181px;top:394px;width:4px;height:5px;background:#7b777c"></div>
<div style="left:41px;top:399px;width:5px;height:5px;background:#cec4c0"></div>
<div style="left:46px;top:399px;width:5px;height:5px;background:#acafaf"></div>
<div style="left:51px;top:399px;width:5px;height:5px;background:#c4bdcb"></div>
<div style="left:56px;top:399px;width:5px;height:5px;background:#8fa0a9"></div>
<div style="left:61px;top:399px;width:5px;height:5px;background:#b7b5b6"></div>
<div style="left:66px;top:399px;width:5px;height:5px;background:#c1bbca"></div>
<div style="left:71px;top:399px;width:5px;height:5px;background:#9c90a8"></div>
<div style="left:76px;top:399px;width:5px;height:5px;background:#aaabb4"></div>
<div style="left:81px;top:399px;width:5px;height:5px;background:#b7a1b1"></div>
<div style="left:86px;top:399px;width:5px;height:5px;background:#d1d1d7"></div>
<div style="left:91px;top:399px;width:5px;height:5px;background:#b1aac3"></div>
<div style="left:96px;top:399px;width:5px;height:5px;background:#9c9cab"></div>
<div style="left:101px;top:399px;width:5px;height:5px;background:#ab9ba0"></div>
<div style="left:106px;top:399px;width:5px;height:5px;background:#aab0b9"></div>
<div style="left:111px;top:399px;width:5px;height:5px;background:#b8bbc3"></div>
<div style="left:116px;top:399px;width:5px;height:5px;background:#bfb7b3"></div>
<div style="left:121px;top:399px;width:5px;height:5px;background:#969cab"></div>
<div style="left:126px;top:399px;width:5px;height:5px;background:#cbc8d2"></div>
<div style="left:131px;top:399px;width:5px;height:5px;background:#b6becf"></div>
<div style="left:136px;top:399px;width:5px;height:5px;background:#cdc9cc"></div>
<div style="left:141px;top:399px;width:5px;height:5px;background:#bdbabc"></div>
<div style="left:146px;top:399px;width:5px;height:5px;background:#cbc7d1"></div>
<div style="left:151px;top:399px;width:5px;height:5px;background:#e8e8f0"></div>
<div style="left:156px;top:399px;width:5px;height:5px;background:#bbbbb4"></div>
<div style="left:161px;top:399px;width:5px;height:5px;background:#b6acb6"></div>
<div style="left:166px;top:399px;width:5px;height:5px;background:#d1ced7"></div>
<div style="left:171px;top:399px;width:5px;height:5px;background:#a5b1b8"></div>
<div style="left:176px;top:399px;width:5px;height:5px;background:#bab3bb"></div>
<div style="left:181px;top:399px;width:4px;height:5px;background:#c4c2cf"></div>
<svg style="position:absolute;left:585px;top:289px" width="14" height="21" viewBox="0 0 14 21"><path d="M0.5 0.5 V17 L4.3 13.3 L7.1 19.6 L9.7 18.5 L7 12.3 H12.2 Z" fill="#fff" stroke="#000" stroke-width="1" stroke-linejoin="miter"/></svg>
<div style="left:14px;top:488px;width:10px;height:1px;background:#a4a4ac"></div>
<div style="left:14px;top:489px;width:10px;height:1px;background:#fff"></div>
<div class="t" style="left:26px;top:482px;">Details (Texte)</div>
<div style="left:100px;top:488px;width:507px;height:1px;background:#a4a4ac"></div>
<div style="left:100px;top:489px;width:507px;height:1px;background:#fff"></div>
<div class="t" style="left:611px;top:482px;">Bemerkungen (Fach)</div>
<div style="left:717px;top:488px;width:466px;height:1px;background:#a4a4ac"></div>
<div style="left:717px;top:489px;width:466px;height:1px;background:#fff"></div>
<div style="left:20px;top:499px;width:572px;height:141px;background:#fff;border:1px solid #c0c0c8;border-bottom:none;box-sizing:border-box"></div>
<div style="left:604px;top:499px;width:572px;height:141px;background:#f4f4fe;border:1px solid #c8c8d0;border-bottom:none;box-sizing:border-box"></div>
<div style="left:14px;top:493px;width:63px;height:29px;border:2px solid #f00;box-sizing:border-box;box-shadow:2px 3px 3px rgba(0,0,0,0.28);background:#fff"></div>
<div style="left:16px;top:495px;width:59px;height:25px;background:linear-gradient(#c4c8d0,#d8dae0 5px,#fff 5px)"></div>
<div style="left:16px;top:500px;width:5px;height:20px;background:linear-gradient(90deg,#c4c8d0,#e0e2e8)"></div>
<div class="t" style="left:24px;top:502px;letter-spacing:0.15px">Englisch</div>
<div style="left:0px;top:640px;width:1200px;height:2px;background:#000"></div>
</body></html>
